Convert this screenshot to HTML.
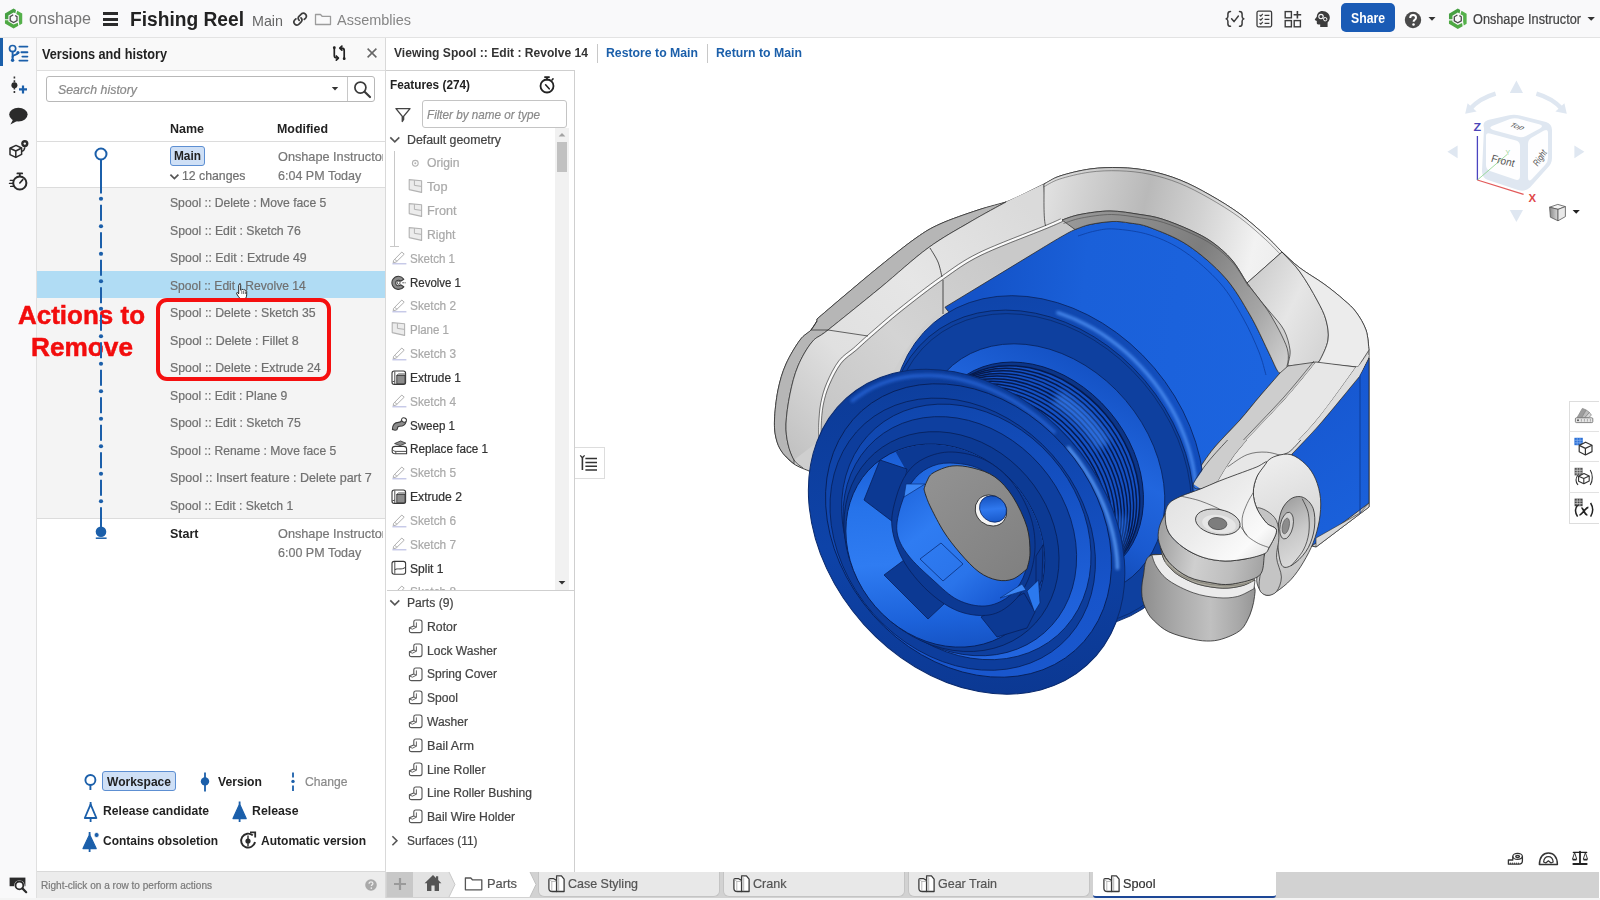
<!DOCTYPE html>
<html><head><meta charset="utf-8"><title>Fishing Reel</title>
<style>
html,body{margin:0;padding:0;}
body{width:1600px;height:900px;overflow:hidden;background:#fff;position:relative;font-family:"Liberation Sans",sans-serif;}
#r{position:absolute;left:0;top:0;width:1600px;height:900px;overflow:hidden;}
#r div,#r svg,#r span.t{position:absolute;box-sizing:border-box;}
#r span.t{white-space:nowrap;transform-origin:0 50%;display:block;}
</style></head><body><div id="r">
<svg style="left:740px;top:140px;" width="660" height="580" viewBox="740 140 660 580"><defs><linearGradient id="gTop" gradientUnits="userSpaceOnUse" x1="1040" y1="200" x2="1290" y2="260"><stop offset="0" stop-color="#e2e2e2"/><stop offset="0.18" stop-color="#cfcfcf"/><stop offset="0.4" stop-color="#b9b9b9"/><stop offset="0.62" stop-color="#d2d2d2"/><stop offset="0.85" stop-color="#f2f2f2"/><stop offset="1" stop-color="#ececec"/></linearGradient><linearGradient id="gLeft" gradientUnits="userSpaceOnUse" x1="790" y1="450" x2="1040" y2="220"><stop offset="0" stop-color="#c2c2c2"/><stop offset="0.12" stop-color="#cecece"/><stop offset="0.3" stop-color="#e0e0e0"/><stop offset="0.6" stop-color="#e6e6e6"/><stop offset="1" stop-color="#dadada"/></linearGradient><linearGradient id="gRight" gradientUnits="userSpaceOnUse" x1="1250" y1="290" x2="1330" y2="330"><stop offset="0" stop-color="#cfcfcf"/><stop offset="0.5" stop-color="#e6e6e6"/><stop offset="1" stop-color="#d6d6d6"/></linearGradient><linearGradient id="gInner" gradientUnits="userSpaceOnUse" x1="820" y1="440" x2="1000" y2="260"><stop offset="0" stop-color="#c4c4c4"/><stop offset="0.5" stop-color="#d4d4d4"/><stop offset="1" stop-color="#c9c9c9"/></linearGradient><linearGradient id="bSide" gradientUnits="userSpaceOnUse" x1="1290" y1="380" x2="1369" y2="500"><stop offset="0" stop-color="#1656cf"/><stop offset="1" stop-color="#1a60da"/></linearGradient><linearGradient id="bCyl" gradientUnits="userSpaceOnUse" x1="980" y1="300" x2="1270" y2="330"><stop offset="0" stop-color="#1453c8"/><stop offset="0.35" stop-color="#1a60d9"/><stop offset="1" stop-color="#1c64df"/></linearGradient><linearGradient id="gRing" gradientUnits="userSpaceOnUse" x1="1060" y1="220" x2="1290" y2="360"><stop offset="0" stop-color="#9a9a9a"/><stop offset="0.5" stop-color="#7d7d7d"/><stop offset="0.8" stop-color="#a5a5a5"/><stop offset="1" stop-color="#d0d0d0"/></linearGradient><filter id="blur2" x="-20%" y="-20%" width="140%" height="140%"><feGaussianBlur stdDeviation="1.6"/></filter><filter id="blur4" x="-20%" y="-20%" width="140%" height="140%"><feGaussianBlur stdDeviation="3.5"/></filter><linearGradient id="bRear" gradientUnits="userSpaceOnUse" x1="930" y1="330" x2="1200" y2="480"><stop offset="0" stop-color="#0f45ab"/><stop offset="0.45" stop-color="#1350c2"/><stop offset="0.8" stop-color="#1049b6"/><stop offset="1" stop-color="#0d3f9f"/></linearGradient><linearGradient id="bStep" gradientUnits="userSpaceOnUse" x1="1040" y1="340" x2="1150" y2="610"><stop offset="0" stop-color="#1350c2"/><stop offset="0.3" stop-color="#2166de"/><stop offset="0.5" stop-color="#1a5ad0"/><stop offset="0.7" stop-color="#1046ad"/><stop offset="1" stop-color="#0d3c98"/></linearGradient><linearGradient id="bFrontRim" gradientUnits="userSpaceOnUse" x1="820" y1="420" x2="1120" y2="640"><stop offset="0" stop-color="#0c3a95"/><stop offset="0.5" stop-color="#0e43a8"/><stop offset="1" stop-color="#0b3790"/></linearGradient><linearGradient id="bFace" gradientUnits="userSpaceOnUse" x1="830" y1="450" x2="1110" y2="620"><stop offset="0" stop-color="#0d3e9c"/><stop offset="0.4" stop-color="#1149b4"/><stop offset="0.75" stop-color="#1754ca"/><stop offset="1" stop-color="#1a58ce"/></linearGradient><linearGradient id="bFaceB" gradientUnits="userSpaceOnUse" x1="830" y1="450" x2="1110" y2="620"><stop offset="0" stop-color="#0f44a8"/><stop offset="0.4" stop-color="#1450c2"/><stop offset="0.75" stop-color="#1f61da"/><stop offset="1" stop-color="#2468e2"/></linearGradient><linearGradient id="bFunnel" gradientUnits="userSpaceOnUse" x1="850" y1="480" x2="1040" y2="620"><stop offset="0" stop-color="#1656cf"/><stop offset="0.3" stop-color="#2673ea"/><stop offset="0.55" stop-color="#2f7cf2"/><stop offset="0.8" stop-color="#1c62da"/><stop offset="1" stop-color="#124bb8"/></linearGradient><linearGradient id="bBore" gradientUnits="userSpaceOnUse" x1="895" y1="480" x2="1000" y2="610"><stop offset="0" stop-color="#1c62da"/><stop offset="0.35" stop-color="#2f7cf2"/><stop offset="0.7" stop-color="#2a74ea"/><stop offset="1" stop-color="#1656cf"/></linearGradient><linearGradient id="gDisc" gradientUnits="userSpaceOnUse" x1="930" y1="470" x2="1030" y2="580"><stop offset="0" stop-color="#929292"/><stop offset="1" stop-color="#7f7f7f"/></linearGradient><linearGradient id="bHole" gradientUnits="userSpaceOnUse" x1="980" y1="498" x2="1004" y2="522"><stop offset="0" stop-color="#0f48b2"/><stop offset="0.5" stop-color="#2f78ee"/><stop offset="1" stop-color="#1250c0"/></linearGradient><linearGradient id="gRoll" gradientUnits="userSpaceOnUse" x1="1142" y1="600" x2="1256" y2="600"><stop offset="0" stop-color="#8e8e8e"/><stop offset="0.3" stop-color="#a9a9a9"/><stop offset="0.6" stop-color="#c0c0c0"/><stop offset="0.85" stop-color="#a8a8a8"/><stop offset="1" stop-color="#959595"/></linearGradient><linearGradient id="gEye" gradientUnits="userSpaceOnUse" x1="1270" y1="460" x2="1325" y2="590"><stop offset="0" stop-color="#ededed"/><stop offset="0.5" stop-color="#d9d9d9"/><stop offset="1" stop-color="#b9b9b9"/></linearGradient><linearGradient id="gEyeIn" gradientUnits="userSpaceOnUse" x1="1280" y1="500" x2="1320" y2="560"><stop offset="0" stop-color="#9c9c9c"/><stop offset="0.5" stop-color="#c9c9c9"/><stop offset="1" stop-color="#e2e2e2"/></linearGradient><linearGradient id="gHeadS" gradientUnits="userSpaceOnUse" x1="1160" y1="540" x2="1268" y2="560"><stop offset="0" stop-color="#a2a2a2"/><stop offset="0.35" stop-color="#cfcfcf"/><stop offset="0.7" stop-color="#bdbdbd"/><stop offset="1" stop-color="#a0a0a0"/></linearGradient><linearGradient id="gHeadT" gradientUnits="userSpaceOnUse" x1="1170" y1="470" x2="1260" y2="560"><stop offset="0" stop-color="#dedede"/><stop offset="0.5" stop-color="#ececec"/><stop offset="0.85" stop-color="#fafafa"/><stop offset="1" stop-color="#e6e6e6"/></linearGradient></defs><path d="M809.0,471.0 C806.5,469.8 798.5,467.2 794.0,464.0 C789.5,460.8 785.0,456.3 782.0,452.0 C779.0,447.7 777.2,443.3 776.0,438.0 C774.8,432.7 774.2,428.0 774.5,420.0 C774.8,412.0 776.1,399.3 778.0,390.0 C779.9,380.7 782.3,372.3 786.0,364.0 C789.7,355.7 795.8,345.7 800.0,340.0 C804.2,334.3 808.2,333.2 811.0,330.0 C813.8,326.8 816.0,322.5 817.0,321.0 L817.0,319.0 C821.5,315.2 833.5,304.8 844.0,296.0 C854.5,287.2 868.0,275.7 880.0,266.0 C892.0,256.3 906.0,245.0 916.0,238.0 C926.0,231.0 929.7,228.7 940.0,224.0 C950.3,219.3 967.0,213.7 978.0,210.0 C989.0,206.3 995.0,206.3 1006.0,202.0 C1017.0,197.7 1035.0,188.3 1044.0,184.0 C1053.0,179.7 1052.3,178.5 1060.0,176.0 C1067.7,173.5 1080.0,170.4 1090.0,169.0 C1100.0,167.6 1110.0,167.3 1120.0,167.6 C1130.0,167.9 1140.0,168.9 1150.0,171.0 C1160.0,173.1 1170.0,176.0 1180.0,180.0 C1190.0,184.0 1200.0,189.3 1210.0,195.0 C1220.0,200.7 1230.7,207.2 1240.0,214.0 C1249.3,220.8 1259.0,229.7 1266.0,236.0 C1273.0,242.3 1276.3,246.7 1282.0,252.0 C1287.7,257.3 1293.0,262.7 1300.0,268.0 C1307.0,273.3 1316.7,278.7 1324.0,284.0 C1331.3,289.3 1338.7,295.3 1344.0,300.0 C1349.3,304.7 1352.3,307.0 1356.0,312.0 C1359.7,317.0 1363.8,323.7 1366.0,330.0 C1368.2,336.3 1368.5,346.7 1369.0,350.0 L1369.0,350.0 L1369.0,507.0 L1369.0,507.0 L1316.0,547.0 L1316.0,547.0 L1200.0,520.0 L1200.0,520.0 L1000.0,500.0 L1000.0,500.0 L809.0,471.0Z" fill="#cfcfcf" stroke="#2a2a2a" stroke-width="0.9" /><path d="M794.0,464.0 C792.0,462.0 785.0,456.3 782.0,452.0 C779.0,447.7 777.2,443.3 776.0,438.0 C774.8,432.7 774.2,428.0 774.5,420.0 C774.8,412.0 776.1,399.3 778.0,390.0 C779.9,380.7 782.3,372.3 786.0,364.0 C789.7,355.7 795.8,345.7 800.0,340.0 C804.2,334.3 808.2,333.2 811.0,330.0 C813.8,326.8 816.0,322.5 817.0,321.0 L817.0,319.0 C821.5,315.2 833.5,304.8 844.0,296.0 C854.5,287.2 868.0,275.7 880.0,266.0 C892.0,256.3 906.0,245.0 916.0,238.0 C926.0,231.0 929.7,228.7 940.0,224.0 C950.3,219.3 967.0,213.7 978.0,210.0 C989.0,206.3 1001.3,203.3 1006.0,202.0 L1006.0,202.0 C1000.0,205.3 983.0,214.3 970.0,222.0 C957.0,229.7 943.0,237.0 928.0,248.0 C913.0,259.0 896.7,274.3 880.0,288.0 C863.3,301.7 839.3,321.0 828.0,330.0 C816.7,339.0 817.0,336.0 812.0,342.0 C807.0,348.0 801.7,357.3 798.0,366.0 C794.3,374.7 792.0,384.3 790.0,394.0 C788.0,403.7 786.3,415.7 786.0,424.0 C785.7,432.3 786.7,438.0 788.0,444.0 C789.3,450.0 793.0,457.3 794.0,460.0Z" fill="#b6b6b6" stroke="#2a2a2a" stroke-width="0.7" /><path d="M794.0,460.0 C793.0,457.3 789.3,450.0 788.0,444.0 C786.7,438.0 785.7,432.3 786.0,424.0 C786.3,415.7 788.0,403.7 790.0,394.0 C792.0,384.3 794.3,374.7 798.0,366.0 C801.7,357.3 807.0,348.0 812.0,342.0 C817.0,336.0 816.7,339.0 828.0,330.0 C839.3,321.0 863.3,301.7 880.0,288.0 C896.7,274.3 913.0,259.0 928.0,248.0 C943.0,237.0 957.0,229.7 970.0,222.0 C983.0,214.3 1000.0,205.3 1006.0,202.0 L1006.0,202.0 L1044.0,184.0 L1044.0,184.0 L1046.0,227.0 L1046.0,227.0 C1035.0,231.5 997.3,245.5 980.0,254.0 C962.7,262.5 955.3,268.7 942.0,278.0 C928.7,287.3 912.0,300.4 900.0,310.0 C888.0,319.6 877.5,329.0 870.0,335.5 C862.5,342.0 860.0,344.6 855.0,349.0 C850.0,353.4 844.5,356.2 840.0,362.0 C835.5,367.8 831.0,377.0 828.0,384.0 C825.0,391.0 823.3,397.3 822.0,404.0 C820.7,410.7 820.3,418.0 820.0,424.0 C819.7,430.0 820.0,437.3 820.0,440.0Z" fill="url(#gLeft)" stroke="none" stroke-width="1" /><path d="M803.0,468.0 C801.5,466.7 796.5,464.0 794.0,460.0 C791.5,456.0 789.3,450.0 788.0,444.0 C786.7,438.0 785.7,432.3 786.0,424.0 C786.3,415.7 788.0,403.7 790.0,394.0 C792.0,384.3 794.3,374.7 798.0,366.0 C801.7,357.3 807.0,348.0 812.0,342.0 C817.0,336.0 816.7,339.0 828.0,330.0 C839.3,321.0 863.3,301.7 880.0,288.0 C896.7,274.3 913.0,259.0 928.0,248.0 C943.0,237.0 957.0,229.7 970.0,222.0 C983.0,214.3 1000.0,205.3 1006.0,202.0" fill="none" stroke="#2a2a2a" stroke-width="0.7" /><path d="M1044,184 L1046,227" fill="none" stroke="#2a2a2a" stroke-width="0.7" /><path d="M1044.0,184.0 C1046.7,182.7 1052.3,178.5 1060.0,176.0 C1067.7,173.5 1080.0,170.4 1090.0,169.0 C1100.0,167.6 1110.0,167.3 1120.0,167.6 C1130.0,167.9 1140.0,168.9 1150.0,171.0 C1160.0,173.1 1170.0,176.0 1180.0,180.0 C1190.0,184.0 1200.0,189.3 1210.0,195.0 C1220.0,200.7 1230.7,207.2 1240.0,214.0 C1249.3,220.8 1259.0,229.7 1266.0,236.0 C1273.0,242.3 1279.3,249.3 1282.0,252.0 L1282.0,252.0 L1247.0,283.0 L1247.0,283.0 C1244.5,279.2 1237.8,266.8 1232.0,260.0 C1226.2,253.2 1219.0,247.0 1212.0,242.0 C1205.0,237.0 1198.3,233.8 1190.0,230.0 C1181.7,226.2 1170.3,221.6 1162.0,219.0 C1153.7,216.4 1148.7,215.8 1140.0,214.5 C1131.3,213.2 1120.0,211.0 1110.0,211.0 C1100.0,211.0 1088.0,213.0 1080.0,214.5 C1072.0,216.0 1065.0,219.1 1062.0,220.0 L1062.0,220.0 C1059.3,221.2 1049.0,233.0 1046.0,227.0 C1043.0,221.0 1044.3,191.2 1044.0,184.0Z" fill="url(#gTop)" stroke="#2a2a2a" stroke-width="0.7" /><path d="M1043.2,187.2 C1045.9,185.9 1051.5,181.7 1059.2,179.2 C1066.9,176.7 1079.2,173.6 1089.2,172.2 C1099.2,170.8 1109.2,170.5 1119.2,170.8 C1129.2,171.1 1139.2,172.1 1149.2,174.2 C1159.2,176.3 1169.2,179.2 1179.2,183.2 C1189.2,187.2 1199.2,192.5 1209.2,198.2 C1219.2,203.9 1229.9,210.4 1239.2,217.2 C1248.5,224.0 1258.2,232.9 1265.2,239.2 C1272.2,245.5 1278.5,252.5 1281.2,255.2" fill="none" stroke="#555" stroke-width="0.6" /><path d="M1247.0,283.0 L1282.0,252.0 L1282.0,252.0 C1285.0,255.3 1294.2,264.0 1300.0,272.0 C1305.8,280.0 1312.7,292.0 1317.0,300.0 C1321.3,308.0 1324.2,313.3 1326.0,320.0 C1327.8,326.7 1329.0,333.3 1328.0,340.0 C1327.0,346.7 1322.0,356.2 1320.0,360.0 C1318.0,363.8 1316.7,362.5 1316.0,363.0 L1316.0,363.0 L1288.0,366.0 L1288.0,364.0 C1288.3,361.7 1290.7,355.7 1290.0,350.0 C1289.3,344.3 1287.3,336.3 1284.0,330.0 C1280.7,323.7 1274.0,317.0 1270.0,312.0 C1266.0,307.0 1263.8,304.8 1260.0,300.0 C1256.2,295.2 1249.2,285.8 1247.0,283.0Z" fill="url(#gRight)" stroke="#2a2a2a" stroke-width="0.7" /><path d="M1282.0,252.0 C1285.0,254.7 1293.0,262.7 1300.0,268.0 C1307.0,273.3 1316.7,278.7 1324.0,284.0 C1331.3,289.3 1338.7,295.3 1344.0,300.0 C1349.3,304.7 1352.3,307.0 1356.0,312.0 C1359.7,317.0 1363.8,323.7 1366.0,330.0 C1368.2,336.3 1368.5,346.7 1369.0,350.0 L1369.0,350.0 L1358.0,367.0 L1358.0,367.0 L1316.0,363.0 L1316.0,363.0 C1316.7,362.5 1318.0,363.8 1320.0,360.0 C1322.0,356.2 1327.0,346.7 1328.0,340.0 C1329.0,333.3 1327.8,326.7 1326.0,320.0 C1324.2,313.3 1321.3,308.0 1317.0,300.0 C1312.7,292.0 1305.8,280.0 1300.0,272.0 C1294.2,264.0 1285.0,255.3 1282.0,252.0Z" fill="#ececec" stroke="#2a2a2a" stroke-width="0.7" /><path d="M820.0,440.0 C820.0,437.3 819.7,430.0 820.0,424.0 C820.3,418.0 820.7,410.7 822.0,404.0 C823.3,397.3 825.0,391.0 828.0,384.0 C831.0,377.0 835.5,367.8 840.0,362.0 C844.5,356.2 850.0,353.4 855.0,349.0 C860.0,344.6 862.5,342.0 870.0,335.5 C877.5,329.0 888.0,319.6 900.0,310.0 C912.0,300.4 928.7,287.3 942.0,278.0 C955.3,268.7 962.7,262.5 980.0,254.0 C997.3,245.5 1032.3,232.7 1046.0,227.0 C1059.7,221.3 1059.3,221.2 1062.0,220.0 L1062.0,220.0 L1075.0,229.5 L1075.0,229.5 C1069.2,232.8 1061.7,236.6 1040.0,249.5 C1018.3,262.4 968.3,288.6 945.0,307.0 C921.7,325.4 914.2,337.8 900.0,360.0 C885.8,382.2 873.3,426.7 860.0,440.0 C846.7,453.3 826.7,440.0 820.0,440.0Z" fill="url(#gInner)" stroke="none" stroke-width="1" /><path d="M820.0,440.0 C820.0,437.3 819.7,430.0 820.0,424.0 C820.3,418.0 820.7,410.7 822.0,404.0 C823.3,397.3 825.0,391.0 828.0,384.0 C831.0,377.0 835.5,367.8 840.0,362.0 C844.5,356.2 850.0,353.4 855.0,349.0 C860.0,344.6 862.5,342.0 870.0,335.5 C877.5,329.0 888.0,319.6 900.0,310.0 C912.0,300.4 928.7,287.3 942.0,278.0 C955.3,268.7 962.7,262.5 980.0,254.0 C997.3,245.5 1032.3,232.7 1046.0,227.0 C1059.7,221.3 1059.3,221.2 1062.0,220.0" fill="none" stroke="#fafafa" stroke-width="2.2" /><path d="M821.2,441.2 C821.2,438.5 820.9,431.2 821.2,425.2 C821.5,419.2 821.9,411.9 823.2,405.2 C824.5,398.5 826.2,392.2 829.2,385.2 C832.2,378.2 836.7,369.0 841.2,363.2 C845.7,357.4 851.2,354.6 856.2,350.2 C861.2,345.8 863.7,343.2 871.2,336.7 C878.7,330.2 889.2,320.8 901.2,311.2 C913.2,301.6 929.9,288.5 943.2,279.2 C956.5,269.9 963.9,263.7 981.2,255.2 C998.5,246.7 1033.5,233.9 1047.2,228.2 C1060.9,222.5 1060.5,222.4 1063.2,221.2" fill="none" stroke="#2a2a2a" stroke-width="0.6" /><path d="M818.8,438.8 C818.8,436.1 818.5,428.8 818.8,422.8 C819.1,416.8 819.5,409.5 820.8,402.8 C822.1,396.1 823.8,389.8 826.8,382.8 C829.8,375.8 834.3,366.6 838.8,360.8 C843.3,355.0 848.8,352.2 853.8,347.8 C858.8,343.4 861.3,340.8 868.8,334.3 C876.3,327.8 886.8,318.4 898.8,308.8 C910.8,299.2 927.5,286.1 940.8,276.8 C954.1,267.5 961.5,261.3 978.8,252.8 C996.1,244.3 1031.1,231.5 1044.8,225.8 C1058.5,220.1 1058.1,220.0 1060.8,218.8" fill="none" stroke="#2a2a2a" stroke-width="0.6" /><path d="M930.0,248.0 C931.3,250.3 936.0,257.2 938.0,262.0 C940.0,266.8 941.3,274.5 942.0,277.0" fill="none" stroke="#2a2a2a" stroke-width="0.8" /><path d="M943,280 L943,314" fill="none" stroke="#2a2a2a" stroke-width="0.8" /><path d="M828,330 L868,336" fill="none" stroke="#2a2a2a" stroke-width="0.7" /><path d="M817,321 L811,330 L828,330" fill="none" stroke="#2a2a2a" stroke-width="0.7" /><path d="M1369.0,358.0 L1369.0,503.0 L1316.0,543.0 L1292.0,560.0 L1292.0,454.0 L1320.0,424.0 L1359.0,377.0Z" fill="url(#bSide)" stroke="#2a2a2a" stroke-width="0.8" /><path d="M1369.0,503.0 L1369.0,507.0 L1316.0,547.0 L1316.0,538.0 L1360.0,513.0Z" fill="#d9d9d9" stroke="#2a2a2a" stroke-width="0.6" /><path d="M1360,372 L1360,513" fill="none" stroke="#0c3c98" stroke-width="1" /><path d="M945.0,307.2 L1040.0,249.5 L1040.0,249.5 C1043.3,247.5 1054.2,240.8 1060.0,237.5 C1065.8,234.2 1070.0,231.7 1075.0,229.5 C1080.0,227.3 1083.8,225.8 1090.0,224.5 C1096.2,223.2 1105.3,221.8 1112.0,221.5 C1118.7,221.2 1123.7,222.0 1130.0,223.0 C1136.3,224.0 1140.4,223.8 1150.0,227.5 C1159.6,231.2 1175.0,236.7 1187.5,245.0 C1200.0,253.3 1214.6,265.8 1225.0,277.5 C1235.4,289.2 1242.9,302.9 1250.0,315.0 C1257.1,327.1 1263.0,340.8 1267.5,350.0 C1272.0,359.2 1275.4,366.7 1277.0,370.0 L1277.0,370.0 C1277.5,370.5 1282.8,368.7 1280.0,373.0 C1277.2,377.3 1266.7,388.2 1260.0,396.0 C1253.3,403.8 1247.7,411.3 1240.0,420.0 C1232.3,428.7 1221.5,438.8 1214.0,448.0 C1206.5,457.2 1198.2,470.5 1195.0,475.0 L1195.0,475.0 C1179.2,482.5 1132.5,532.5 1100.0,520.0 C1067.5,507.5 1022.5,430.8 1000.0,400.0 C977.5,369.2 974.2,350.5 965.0,335.0 C955.8,319.5 948.3,311.8 945.0,307.2Z" fill="url(#bCyl)" stroke="#2a2a2a" stroke-width="0.8" /><path d="M1078.0,236.0 C1080.8,235.2 1088.8,232.2 1095.0,231.0 C1101.2,229.8 1105.8,228.3 1115.0,229.0 C1124.2,229.7 1138.3,231.2 1150.0,235.0 C1161.7,238.8 1173.3,244.0 1185.0,252.0 C1196.7,260.0 1210.3,272.0 1220.0,283.0 C1229.7,294.0 1236.5,306.5 1243.0,318.0 C1249.5,329.5 1255.2,342.5 1259.0,352.0 C1262.8,361.5 1264.8,371.2 1266.0,375.0" fill="none" stroke="#0e42a6" stroke-width="0.9" /><path d="M1062.0,220.0 C1065.0,219.1 1072.0,216.0 1080.0,214.5 C1088.0,213.0 1100.0,211.0 1110.0,211.0 C1120.0,211.0 1131.3,213.2 1140.0,214.5 C1148.7,215.8 1153.7,216.4 1162.0,219.0 C1170.3,221.6 1181.7,226.2 1190.0,230.0 C1198.3,233.8 1205.0,237.0 1212.0,242.0 C1219.0,247.0 1226.2,253.2 1232.0,260.0 C1237.8,266.8 1242.3,276.3 1247.0,283.0 C1251.7,289.7 1256.2,294.8 1260.0,300.0 C1263.8,305.2 1266.3,308.0 1270.0,314.0 C1273.7,320.0 1279.0,329.7 1282.0,336.0 C1285.0,342.3 1287.2,347.0 1288.0,352.0 C1288.8,357.0 1288.3,362.3 1287.0,366.0 C1285.7,369.7 1281.2,372.7 1280.0,374.0 L1280.0,373.0 C1279.5,372.5 1279.1,373.8 1277.0,370.0 C1274.9,366.2 1272.0,359.2 1267.5,350.0 C1263.0,340.8 1257.1,327.1 1250.0,315.0 C1242.9,302.9 1235.4,289.2 1225.0,277.5 C1214.6,265.8 1200.0,253.3 1187.5,245.0 C1175.0,236.7 1159.6,231.2 1150.0,227.5 C1140.4,223.8 1136.3,224.0 1130.0,223.0 C1123.7,222.0 1118.7,221.2 1112.0,221.5 C1105.3,221.8 1096.2,223.2 1090.0,224.5 C1083.8,225.8 1077.5,228.7 1075.0,229.5Z" fill="url(#gRing)" stroke="#2a2a2a" stroke-width="0.7" /><path d="M1063.5,223.5 C1066.5,222.6 1073.5,219.5 1081.5,218.0 C1089.5,216.5 1101.5,214.5 1111.5,214.5 C1121.5,214.5 1132.8,216.7 1141.5,218.0 C1150.2,219.3 1155.2,219.9 1163.5,222.5 C1171.8,225.1 1183.2,229.7 1191.5,233.5 C1199.8,237.3 1206.5,240.5 1213.5,245.5 C1220.5,250.5 1227.7,256.7 1233.5,263.5 C1239.3,270.3 1246.0,282.7 1248.5,286.5" fill="none" stroke="#555" stroke-width="0.7" /><path d="M1280.0,373.0 C1276.7,376.8 1266.7,388.2 1260.0,396.0 C1253.3,403.8 1247.7,411.3 1240.0,420.0 C1232.3,428.7 1221.2,439.3 1214.0,448.0 C1206.8,456.7 1199.8,468.0 1197.0,472.0 L1197.0,472.0 L1222.0,470.0 L1222.0,470.0 C1225.0,466.2 1229.3,459.0 1240.0,447.0 C1250.7,435.0 1273.3,412.2 1286.0,398.0 C1298.7,383.8 1311.0,368.0 1316.0,362.0 L1316.0,362.0 C1311.3,362.7 1294.0,364.2 1288.0,366.0 C1282.0,367.8 1281.3,371.8 1280.0,373.0Z" fill="#cdcdcd" stroke="none" stroke-width="1" /><path d="M1280.0,373.0 C1276.7,376.8 1266.7,388.2 1260.0,396.0 C1253.3,403.8 1247.7,411.3 1240.0,420.0 C1232.3,428.7 1221.2,439.3 1214.0,448.0 C1206.8,456.7 1199.8,468.0 1197.0,472.0" fill="none" stroke="#2a2a2a" stroke-width="0.7" /><path d="M1316.0,362.0 C1311.0,368.0 1298.7,383.8 1286.0,398.0 C1273.3,412.2 1250.7,435.0 1240.0,447.0 C1229.3,459.0 1225.0,466.2 1222.0,470.0" fill="none" stroke="#2a2a2a" stroke-width="0.7" /><path d="M1316,362 L1288,366 L1280,373" fill="none" stroke="#2a2a2a" stroke-width="0.7" /><path d="M1316.0,362.0 C1311.0,368.0 1298.7,383.8 1286.0,398.0 C1273.3,412.2 1250.7,435.0 1240.0,447.0 C1229.3,459.0 1225.0,466.2 1222.0,470.0 L1222.0,470.0 L1268.0,470.0 L1268.0,470.0 C1271.7,466.5 1281.3,458.0 1290.0,449.0 C1298.7,440.0 1309.0,429.7 1320.0,416.0 C1331.0,402.3 1350.0,375.2 1356.0,367.0 L1356.0,367.0 L1316.0,362.0Z" fill="#e7e7e7" stroke="none" stroke-width="1" /><path d="M1356.0,367.0 C1350.0,375.2 1331.0,402.3 1320.0,416.0 C1309.0,429.7 1298.7,440.0 1290.0,449.0 C1281.3,458.0 1271.7,466.5 1268.0,470.0" fill="none" stroke="#2a2a2a" stroke-width="0.7" /><path d="M1356,367 L1316,362" fill="none" stroke="#2a2a2a" stroke-width="0.7" /><path d="M1356.0,367.0 C1350.0,375.2 1331.0,402.3 1320.0,416.0 C1309.0,429.7 1298.7,440.0 1290.0,449.0 C1281.3,458.0 1271.7,466.5 1268.0,470.0 L1268.0,470.0 L1275.0,472.0 L1275.0,472.0 C1277.8,469.0 1284.5,462.0 1292.0,454.0 C1299.5,446.0 1308.8,436.8 1320.0,424.0 C1331.2,411.2 1352.5,384.8 1359.0,377.0 L1359.0,377.0 C1360.7,373.3 1369.2,356.7 1369.0,355.0 C1368.8,353.3 1359.8,365.0 1358.0,367.0Z" fill="#dedede" stroke="none" stroke-width="1" /><path d="M1359.0,377.0 C1352.5,384.8 1331.2,411.2 1320.0,424.0 C1308.8,436.8 1299.5,446.0 1292.0,454.0 C1284.5,462.0 1277.8,469.0 1275.0,472.0" fill="none" stroke="#2a2a2a" stroke-width="0.6" /><path d="M1314.0,361.0 C1309.0,367.0 1296.7,382.8 1284.0,397.0 C1271.3,411.2 1248.7,434.0 1238.0,446.0 C1227.3,458.0 1223.0,465.2 1220.0,469.0" fill="none" stroke="#2a2a2a" stroke-width="0.6" /><ellipse cx="1048.0" cy="458.0" rx="177.0" ry="139.3" transform="rotate(49.7 1048.0 458.0)" fill="url(#bRear)" stroke="#0a2a6e" stroke-width="0.9" /><path d="M1057.8,312.7 C1060.8,313.8 1069.9,317.0 1075.8,319.7 C1081.7,322.3 1087.6,325.4 1093.3,328.7 C1099.0,332.0 1104.7,335.7 1110.1,339.6 C1115.6,343.6 1120.9,347.8 1126.0,352.3 C1131.1,356.8 1136.0,361.6 1140.7,366.6 C1145.4,371.6 1149.9,376.9 1154.1,382.3 C1158.2,387.7 1162.2,393.3 1165.8,399.1 C1169.5,404.8 1172.8,410.7 1175.9,416.8 C1178.9,422.8 1181.6,428.9 1184.0,435.1 C1186.4,441.3 1188.5,447.6 1190.2,453.9 C1191.9,460.1 1193.2,466.4 1194.2,472.7 C1195.2,479.0 1195.9,485.2 1196.2,491.4 C1196.4,497.6 1196.4,503.7 1195.9,509.7 C1195.5,515.7 1194.7,521.6 1193.5,527.3 C1192.3,533.0 1190.8,538.6 1188.9,543.9 C1187.1,549.3 1183.4,556.8 1182.3,559.4" fill="none" stroke="#4f92f6" stroke-width="3.2" stroke-linecap="round" opacity="0.9" filter="url(#blur2)"/><ellipse cx="1041.0" cy="469.0" rx="173.3" ry="136.4" transform="rotate(49.7 1041.0 469.0)" fill="#0e409f" stroke="#08245f" stroke-width="0.8" /><ellipse cx="1041.5" cy="469.5" rx="170.0" ry="133.8" transform="rotate(49.7 1041.5 469.5)" fill="#0e409f" stroke="#08245f" stroke-width="0.6" /><ellipse cx="1042.4" cy="471.0" rx="138.7" ry="109.2" transform="rotate(49.7 1042.4 471.0)" fill="url(#bStep)" stroke="#08245f" stroke-width="0.8" /><ellipse cx="1036.7" cy="473.0" rx="121.0" ry="95.2" transform="rotate(49.7 1036.7 473.0)" fill="#0b3589" stroke="#061c50" stroke-width="0.9" /><ellipse cx="1033.8" cy="475.7" rx="120.0" ry="94.4" transform="rotate(49.7 1033.8 475.7)" fill="#1450c2" stroke="#061a4c" stroke-width="1.5" /><ellipse cx="1030.7" cy="478.3" rx="120.0" ry="94.4" transform="rotate(49.7 1030.7 478.3)" fill="#1450c2" stroke="#061a4c" stroke-width="1.5" /><ellipse cx="1027.7" cy="480.9" rx="120.0" ry="94.4" transform="rotate(49.7 1027.7 480.9)" fill="#1450c2" stroke="#061a4c" stroke-width="1.5" /><ellipse cx="1024.6" cy="483.5" rx="120.0" ry="94.4" transform="rotate(49.7 1024.6 483.5)" fill="#1450c2" stroke="#061a4c" stroke-width="1.5" /><ellipse cx="1021.6" cy="486.1" rx="120.0" ry="94.4" transform="rotate(49.7 1021.6 486.1)" fill="#1450c2" stroke="#061a4c" stroke-width="1.5" /><ellipse cx="1018.5" cy="488.7" rx="120.0" ry="94.4" transform="rotate(49.7 1018.5 488.7)" fill="#1450c2" stroke="#061a4c" stroke-width="1.5" /><ellipse cx="1015.5" cy="491.2" rx="120.0" ry="94.4" transform="rotate(49.7 1015.5 491.2)" fill="#1450c2" stroke="#061a4c" stroke-width="1.5" /><ellipse cx="1012.5" cy="493.8" rx="120.0" ry="94.4" transform="rotate(49.7 1012.5 493.8)" fill="#1450c2" stroke="#061a4c" stroke-width="1.5" /><ellipse cx="1009.4" cy="496.4" rx="120.0" ry="94.4" transform="rotate(49.7 1009.4 496.4)" fill="#1450c2" stroke="#061a4c" stroke-width="1.5" /><ellipse cx="1006.4" cy="499.0" rx="120.0" ry="94.4" transform="rotate(49.7 1006.4 499.0)" fill="#1450c2" stroke="#061a4c" stroke-width="1.5" /><ellipse cx="1003.3" cy="501.6" rx="120.0" ry="94.4" transform="rotate(49.7 1003.3 501.6)" fill="#1450c2" stroke="#061a4c" stroke-width="1.5" /><ellipse cx="1000.3" cy="504.2" rx="120.0" ry="94.4" transform="rotate(49.7 1000.3 504.2)" fill="#1450c2" stroke="#061a4c" stroke-width="1.5" /><ellipse cx="997.2" cy="506.8" rx="120.0" ry="94.4" transform="rotate(49.7 997.2 506.8)" fill="#1450c2" stroke="#061a4c" stroke-width="1.5" /><ellipse cx="994.2" cy="509.4" rx="120.0" ry="94.4" transform="rotate(49.7 994.2 509.4)" fill="#1450c2" stroke="#061a4c" stroke-width="1.5" /><ellipse cx="991.1" cy="511.9" rx="120.0" ry="94.4" transform="rotate(49.7 991.1 511.9)" fill="#1450c2" stroke="#061a4c" stroke-width="1.5" /><ellipse cx="988.1" cy="514.5" rx="120.0" ry="94.4" transform="rotate(49.7 988.1 514.5)" fill="#1450c2" stroke="#061a4c" stroke-width="1.5" /><ellipse cx="985.0" cy="517.1" rx="120.0" ry="94.4" transform="rotate(49.7 985.0 517.1)" fill="#1450c2" stroke="#061a4c" stroke-width="1.5" /><path d="M1056.3,397.0 C1057.2,397.6 1060.1,399.4 1062.0,400.7 C1063.8,402.0 1065.7,403.3 1067.5,404.7 C1069.3,406.1 1071.1,407.6 1072.8,409.1 C1074.6,410.6 1076.3,412.1 1078.0,413.7 C1079.6,415.2 1081.3,416.8 1082.9,418.5 C1084.5,420.2 1086.1,421.9 1087.6,423.6 C1089.2,425.3 1090.7,427.1 1092.1,428.9 C1093.6,430.7 1095.0,432.5 1096.3,434.4 C1097.7,436.3 1099.0,438.1 1100.3,440.1 C1101.6,442.0 1103.4,444.9 1104.0,445.9" fill="none" stroke="#3a80ee" stroke-width="16" opacity="0.6" filter="url(#blur4)"/><path d="M1122.7,515.7 C1122.6,516.7 1122.4,519.9 1122.1,521.9 C1121.9,524.0 1121.6,526.0 1121.3,528.0 C1120.9,530.0 1120.5,532.0 1120.0,533.9 C1119.5,535.9 1119.0,537.8 1118.3,539.7 C1117.7,541.6 1117.1,543.4 1116.3,545.3 C1115.6,547.1 1114.8,548.9 1114.0,550.6 C1113.1,552.3 1112.2,554.0 1111.2,555.7 C1110.3,557.3 1109.2,558.9 1108.2,560.5 C1107.1,562.1 1105.9,563.6 1104.8,565.1 C1103.6,566.5 1101.7,568.6 1101.0,569.3" fill="none" stroke="#2a6fe0" stroke-width="14" opacity="0.45" filter="url(#blur4)"/><ellipse cx="966.6" cy="531.7" rx="179.7" ry="138.4" transform="rotate(48.0 966.6 531.7)" fill="url(#bFrontRim)" stroke="#0a2a6e" stroke-width="1" /><path d="M1068.2,447.7 C1069.1,448.8 1071.9,452.1 1073.7,454.4 C1075.5,456.7 1077.3,459.0 1079.0,461.3 C1080.6,463.6 1082.3,466.0 1083.9,468.4 C1085.5,470.8 1087.0,473.2 1088.5,475.6 C1090.0,478.1 1091.5,480.5 1092.9,483.0 C1094.2,485.5 1095.6,488.0 1096.9,490.5 C1098.1,493.0 1099.4,495.6 1100.5,498.1 C1101.7,500.7 1102.8,503.3 1103.9,505.8 C1104.9,508.4 1105.9,511.0 1106.9,513.6 C1107.8,516.2 1108.7,518.8 1109.5,521.4 C1110.3,524.0 1111.1,526.7 1111.7,529.3 C1112.4,531.9 1113.1,534.5 1113.6,537.1 C1114.2,539.8 1114.7,542.4 1115.2,545.0 C1115.6,547.6 1116.0,550.2 1116.3,552.8 C1116.6,555.4 1116.9,558.0 1117.1,560.6 C1117.3,563.1 1117.4,567.0 1117.4,568.2" fill="none" stroke="#5a9bf8" stroke-width="3.4" stroke-linecap="round" opacity="0.95" filter="url(#blur2)"/><path d="M852.5,400.5 C854.7,399.0 861.1,394.0 865.7,391.2 C870.4,388.5 875.4,386.1 880.5,384.0 C885.6,382.0 890.9,380.3 896.4,378.9 C901.9,377.6 907.6,376.7 913.4,376.1 C919.2,375.5 925.1,375.4 931.1,375.6 C937.1,375.7 943.2,376.3 949.3,377.3 C955.4,378.2 961.6,379.6 967.7,381.3 C973.9,383.0 980.1,385.0 986.1,387.5 C992.2,389.9 998.3,392.7 1004.2,395.8 C1010.2,398.9 1016.0,402.3 1021.7,406.1 C1027.4,409.8 1033.0,413.9 1038.4,418.2 C1043.8,422.5 1051.4,429.7 1054.0,432.0" fill="none" stroke="#2a6be0" stroke-width="4" stroke-linecap="round" opacity="0.7" filter="url(#blur2)"/><ellipse cx="968.5" cy="530.5" rx="160.4" ry="127.5" transform="rotate(48.29471511186955 968.5 530.5)" fill="url(#bFace)" stroke="#07205a" stroke-width="0.9" /><ellipse cx="962.7" cy="534.2" rx="147.7" ry="119.7" transform="rotate(48.48938076728606 962.7 534.2)" fill="#0d3d9c" stroke="#07205a" stroke-width="0.8" /><ellipse cx="966.3" cy="531.9" rx="137.9" ry="113.5" transform="rotate(48.63885618126659 966.3 531.9)" fill="url(#bFaceB)" stroke="#07205a" stroke-width="0.8" /><ellipse cx="959.8" cy="536.2" rx="128.3" ry="107.2" transform="rotate(48.78572446593351 959.8 536.2)" fill="#0e3f9f" stroke="#07205a" stroke-width="0.8" /><ellipse cx="951.5" cy="541.6" rx="117.2" ry="99.6" transform="rotate(48.955187871318415 951.5 541.6)" fill="#0c3a94" stroke="#07205a" stroke-width="0.8" /><ellipse cx="945.3" cy="545.6" rx="107.7" ry="92.8" transform="rotate(49.1 945.3 545.6)" fill="url(#bFunnel)" stroke="#07205a" stroke-width="0.9" /><path d="M895.6,451.7 L902.0,449.2 L908.7,447.2 L915.6,445.7 L922.6,444.8 L929.8,444.5 L937.0,444.7 L944.3,445.4 L951.6,446.7 L958.9,448.5 L966.1,450.9 L973.1,453.7 L980.1,457.1 L986.8,461.0 L993.3,465.3 L999.6,470.0 L1005.5,475.2 L1011.2,480.7 L1016.4,486.6 L1021.3,492.8 L1025.8,499.3 L1029.8,506.1 L1033.4,513.0 L1036.5,520.2 L1039.1,527.4 L1041.2,534.8 L1042.7,542.3 L1043.8,549.7 L1044.3,557.1 L1044.2,564.5 L1043.7,571.8 L1042.6,578.9 L1040.9,585.8 L1038.8,592.6 L1036.1,599.0 L1032.9,605.2 L1029.3,611.1 L1025.2,616.6 L1020.7,621.7 L1015.8,626.4 L1010.4,630.7 L1002.0,602.0 L965.0,540.0 L907.0,472.0Z" fill="#0c3993" stroke="none" stroke-width="1" /><path d="M864.0,500.0 L880.0,460.0 L907.0,469.0 L905.0,480.0 L893.0,522.0Z" fill="#0c3993" stroke="#07205a" stroke-width="0.8" /><path d="M884.0,575.0 L904.0,560.0 L944.0,604.0 L928.0,619.0Z" fill="#0c3993" stroke="#07205a" stroke-width="0.8" /><path d="M981.0,617.0 L1024.0,593.0 L1035.0,612.0 L1027.0,628.0 L997.0,637.0Z" fill="#0c3993" stroke="#07205a" stroke-width="0.8" /><path d="M1036.0,556.0 L1043.0,545.0 L1042.0,580.0 L1036.0,590.0Z" fill="#0c3993" stroke="#07205a" stroke-width="0.8" /><path d="M1027.0,591.0 L1038.5,580.0 L1040.0,603.0 L1034.5,612.0Z" fill="#2b79ee" stroke="#07205a" stroke-width="0.6" /><path d="M892.0,527.0 C890.8,516.7 893.5,507.0 896.0,498.0 C898.5,489.0 902.2,479.7 907.0,473.0 C911.8,466.3 917.5,461.5 925.0,458.0 C932.5,454.5 942.0,451.7 952.0,452.0 C962.0,452.3 975.0,455.0 985.0,460.0 C995.0,465.0 1004.5,472.8 1012.0,482.0 C1019.5,491.2 1026.2,504.0 1030.0,515.0 C1033.8,526.0 1035.3,537.2 1035.0,548.0 C1034.7,558.8 1031.8,570.8 1028.0,580.0 C1024.2,589.2 1018.5,597.2 1012.0,603.0 C1005.5,608.8 998.0,613.7 989.0,615.0 C980.0,616.3 968.2,615.0 958.0,611.0 C947.8,607.0 937.2,599.5 928.0,591.0 C918.8,582.5 909.0,570.7 903.0,560.0 C897.0,549.3 893.2,537.3 892.0,527.0Z" fill="#0c3993" stroke="#07205a" stroke-width="0.8" /><path d="M897.0,532.0 C895.8,523.7 898.5,513.3 901.0,505.0 C903.5,496.7 907.5,488.2 912.0,482.0 C916.5,475.8 921.7,471.2 928.0,468.0 C934.3,464.8 941.3,462.8 950.0,463.0 C958.7,463.2 970.7,464.5 980.0,469.0 C989.3,473.5 998.7,481.5 1006.0,490.0 C1013.3,498.5 1020.2,510.0 1024.0,520.0 C1027.8,530.0 1029.2,540.3 1029.0,550.0 C1028.8,559.7 1026.5,570.2 1023.0,578.0 C1019.5,585.8 1014.3,592.3 1008.0,597.0 C1001.7,601.7 993.3,605.5 985.0,606.0 C976.7,606.5 966.7,604.3 958.0,600.0 C949.3,595.7 941.3,587.5 933.0,580.0 C924.7,572.5 914.0,563.0 908.0,555.0 C902.0,547.0 898.2,540.3 897.0,532.0Z" fill="url(#bBore)" stroke="#07205a" stroke-width="0.8" /><path d="M920.0,559.0 L941.0,543.0 L963.0,564.0 L943.0,581.0Z" fill="none" stroke="#0a2f7a" stroke-width="0.8" /><path d="M904.0,497.0 L906.0,484.0 L925.0,484.0Z" fill="#3b86f5" stroke="#0a2f7a" stroke-width="0.7" /><path d="M1000.0,598.0 L1022.0,584.0 L1026.0,590.0Z" fill="#3b86f5" stroke="#0a2f7a" stroke-width="0.7" /><path d="M924.0,489.0 C924.5,487.7 925.5,483.7 927.0,481.0 C928.5,478.3 928.8,475.5 933.0,473.0 C937.2,470.5 945.3,466.8 952.0,466.0 C958.7,465.2 965.8,466.2 973.0,468.0 C980.2,469.8 988.3,472.2 995.0,477.0 C1001.7,481.8 1007.7,488.7 1013.0,497.0 C1018.3,505.3 1024.2,517.7 1027.0,527.0 C1029.8,536.3 1030.0,546.0 1030.0,553.0 C1030.0,560.0 1027.5,566.3 1027.0,569.0 L1027.0,569.0 C1024.7,570.7 1018.0,577.2 1013.0,579.0 C1008.0,580.8 1002.7,581.2 997.0,580.0 C991.3,578.8 985.2,576.5 979.0,572.0 C972.8,567.5 965.8,559.7 960.0,553.0 C954.2,546.3 948.8,539.5 944.0,532.0 C939.2,524.5 934.0,514.0 931.0,508.0 C928.0,502.0 927.2,499.2 926.0,496.0 C924.8,492.8 924.3,490.2 924.0,489.0Z" fill="url(#gDisc)" stroke="#222" stroke-width="0.9" /><ellipse cx="991.0" cy="510.5" rx="16.5" ry="14.8" transform="rotate(40 991.0 510.5)" fill="#f4f4f4" stroke="#222" stroke-width="0.8" /><ellipse cx="993.0" cy="509.0" rx="14.2" ry="12.5" transform="rotate(40 993.0 509.0)" fill="url(#bHole)" stroke="#07205a" stroke-width="0.7" /><path d="M1200.7,488.9 L1193.3,484.0 L1208.0,462.0 L1227.6,440.0 L1247.1,440.0 L1234.9,454.7 L1225.1,469.3 L1217.8,481.6Z" fill="#cdcdcd" stroke="none" stroke-width="1" /><path d="M1227.6,440.0 C1224.3,443.7 1213.7,454.7 1208.0,462.0 C1202.3,469.3 1194.6,479.5 1193.3,484.0 C1192.1,488.5 1196.6,489.3 1200.7,488.9 C1204.8,488.5 1214.9,482.8 1217.8,481.6" fill="none" stroke="#2a2a2a" stroke-width="0.7" /><path d="M1247.1,440.0 C1245.1,442.4 1238.6,449.8 1234.9,454.7 C1231.2,459.6 1228.0,464.9 1225.1,469.3 C1222.3,473.8 1219.0,479.5 1217.8,481.6" fill="none" stroke="#2a2a2a" stroke-width="0.7" /><path d="M1217.8,481.6 L1225.1,469.3 L1234.9,454.7 L1247.1,440.0 L1300.9,440.0 L1288.7,452.2 L1276.5,455.9 L1266.7,462.0 L1256.9,466.9 L1237.4,474.2Z" fill="#e7e7e7" stroke="none" stroke-width="1" /><path d="M1300.9,440.0 C1298.9,442.0 1292.8,449.6 1288.7,452.2 C1284.6,454.9 1278.5,455.3 1276.5,455.9" fill="none" stroke="#2a2a2a" stroke-width="0.7" /><path d="M1227.6,466.9 C1230.8,464.9 1240.6,457.1 1247.1,454.7 C1253.7,452.2 1260.2,451.8 1266.7,452.2 C1273.2,452.6 1283.0,456.3 1286.3,457.1" fill="none" stroke="#2a2a2a" stroke-width="0.6" /><path d="M1151.8,554.9 C1143.4,557.4 1144.9,570.0 1143.2,576.9 C1141.6,583.8 1141.4,590.8 1142.0,596.5 C1142.6,602.2 1144.9,607.1 1146.9,611.1 C1148.9,615.2 1150.6,617.5 1154.2,620.9 C1157.9,624.4 1162.4,628.9 1168.9,631.9 C1175.4,635.0 1186.4,637.8 1193.3,639.3 C1200.3,640.8 1205.2,641.2 1210.5,641.0 C1215.8,640.8 1220.2,639.8 1225.1,638.0 C1230.0,636.3 1236.1,633.6 1239.8,630.7 C1243.5,627.9 1245.1,624.6 1247.1,620.9 C1249.2,617.3 1250.8,612.8 1252.0,608.7 C1253.3,604.6 1254.1,600.1 1254.5,596.5 C1254.8,592.8 1256.0,590.0 1254.0,586.7 C1251.9,583.4 1252.4,581.0 1242.2,576.9 C1232.1,572.8 1208.4,565.9 1193.3,562.2 C1178.3,558.6 1160.1,552.5 1151.8,554.9Z" fill="url(#gRoll)" stroke="#2a2a2a" stroke-width="0.8" /><path d="M1151.8,554.9 C1152.6,557.0 1153.8,562.9 1156.7,567.1 C1159.5,571.4 1162.8,576.3 1168.9,580.6 C1175.0,584.9 1185.2,590.0 1193.3,592.8 C1201.5,595.7 1210.5,597.1 1217.8,597.7 C1225.1,598.3 1231.3,598.0 1237.4,596.5 C1243.4,595.0 1251.2,590.0 1254.0,588.7 L1255.0,579.9 C1252.8,580.8 1247.6,584.3 1242.2,585.7 C1236.9,587.1 1230.0,588.4 1222.7,588.2 C1215.4,587.9 1205.8,586.5 1198.2,584.3 C1190.7,582.0 1182.8,578.0 1177.5,574.5 C1172.1,570.9 1168.5,566.3 1166.0,563.0 C1163.4,559.6 1162.7,555.9 1162.1,554.4Z" fill="#ebebeb" stroke="#2a2a2a" stroke-width="0.7" /><path d="M1255.0,579.9 C1252.8,580.8 1247.6,584.3 1242.2,585.7 C1236.9,587.1 1230.0,588.4 1222.7,588.2 C1215.4,587.9 1205.8,586.5 1198.2,584.3 C1190.7,582.0 1182.8,578.0 1177.5,574.5 C1172.1,570.9 1168.5,566.3 1166.0,563.0 C1163.4,559.6 1162.7,555.9 1162.1,554.4 L1162.1,554.4 L1160.3,547.6 L1160.3,547.6 C1161.8,550.0 1164.2,557.4 1168.9,562.2 C1173.6,567.1 1181.1,573.5 1188.5,576.9 C1195.8,580.4 1206.0,581.8 1212.9,583.0 C1219.8,584.3 1223.5,584.9 1230.0,584.3 C1236.5,583.6 1248.4,580.2 1252.0,579.4 L1252.0,579.4 L1255.0,579.9Z" fill="#aeaca1" stroke="#2a2a2a" stroke-width="0.6" /><path d="M1165.2,562.2 C1167.5,564.2 1173.2,570.7 1178.7,574.0 C1184.2,577.2 1190.9,579.9 1198.2,581.8 C1205.6,583.8 1215.4,585.3 1222.7,585.7 C1230.0,586.1 1237.2,585.1 1242.2,584.3 C1247.3,583.4 1251.4,581.2 1253.3,580.6" fill="none" stroke="#8e8c82" stroke-width="1.2" /><path d="M1256.9,508.5 C1254.7,503.4 1253.3,497.9 1253.3,492.6 C1253.3,487.3 1254.7,481.8 1256.9,476.7 C1259.2,471.6 1263.4,465.5 1266.7,462.0 C1270.0,458.5 1272.4,457.1 1276.5,455.9 C1280.6,454.7 1286.3,453.2 1291.1,454.7 C1296.0,456.1 1301.7,460.4 1305.8,464.4 C1309.9,468.5 1313.2,473.4 1315.6,479.1 C1318.0,484.8 1319.9,491.8 1320.5,498.7 C1321.1,505.6 1320.5,513.3 1319.3,520.7 C1318.0,528.0 1315.8,535.8 1313.2,542.7 C1310.5,549.6 1307.0,556.1 1303.4,562.2 C1299.7,568.4 1295.6,574.5 1291.1,579.4 C1286.7,584.3 1280.6,588.9 1276.5,591.6 C1272.4,594.2 1269.6,595.7 1266.7,595.3 C1263.8,594.8 1261.0,592.2 1259.4,589.1 C1257.7,586.1 1256.1,582.6 1256.9,576.9 C1257.7,571.2 1261.0,562.7 1264.3,554.9 C1267.5,547.2 1276.1,535.8 1276.5,530.5 C1276.9,525.2 1270.0,526.8 1266.7,523.1 C1263.4,519.5 1259.2,513.6 1256.9,508.5Z" fill="url(#gEye)" stroke="#2a2a2a" stroke-width="0.8" /><path d="M1281.4,510.9 C1283.6,505.2 1287.5,500.9 1291.1,498.7 C1294.8,496.4 1299.7,495.8 1303.4,497.5 C1307.0,499.1 1311.3,503.4 1313.2,508.5 C1315.0,513.6 1315.2,521.5 1314.4,528.0 C1313.6,534.5 1311.3,541.9 1308.3,547.6 C1305.2,553.3 1300.1,559.0 1296.0,562.2 C1292.0,565.5 1286.7,568.4 1283.8,567.1 C1281.0,565.9 1279.9,560.6 1278.9,554.9 C1277.9,549.2 1277.3,540.2 1277.7,532.9 C1278.1,525.6 1279.1,516.6 1281.4,510.9Z" fill="url(#gEyeIn)" stroke="#2a2a2a" stroke-width="0.8" /><path d="M1302.2,498.7 C1303.2,501.1 1307.2,507.6 1308.3,513.3 C1309.4,519.1 1309.6,526.8 1308.8,532.9 C1307.9,539.0 1306.3,544.5 1303.4,550.0 C1300.4,555.5 1293.2,563.3 1291.1,565.9" fill="none" stroke="#2a2a2a" stroke-width="0.7" /><ellipse cx="1286.600" cy="525.600" rx="6.400" ry="13.600" transform="rotate(12 1286.600 525.600)" fill="#d2d2d2" stroke="#2a2a2a" stroke-width="0.700"/><ellipse cx="1285.800" cy="526" rx="3.400" ry="8" transform="rotate(12 1285.800 526)" fill="#8c8c8c" stroke="#555" stroke-width="0.600"/><path d="M1256.9,508.5 C1256.9,510.5 1263.4,519.5 1266.7,523.1 C1270.0,526.8 1276.1,526.4 1276.5,530.5 C1276.9,534.5 1271.2,543.5 1269.1,547.6 C1267.1,551.7 1265.7,550.8 1264.3,554.9 C1262.8,559.0 1261.4,566.3 1260.6,572.0 C1259.8,577.7 1258.3,585.3 1259.4,589.1 C1260.4,593.0 1263.8,594.8 1266.7,595.3 C1269.6,595.7 1274.0,594.6 1276.5,591.6 C1278.9,588.5 1281.4,582.6 1281.4,576.9 C1281.4,571.2 1276.9,563.9 1276.5,557.4 C1276.1,550.8 1278.9,543.9 1278.9,537.8 C1278.9,531.7 1278.5,525.2 1276.5,520.7 C1274.4,516.2 1270.0,512.9 1266.7,510.9 C1263.4,508.9 1256.9,506.4 1256.9,508.5Z" fill="#c4c4c4" stroke="#2a2a2a" stroke-width="0.7" /><path d="M1165.2,515.8 C1165.8,518.6 1165.8,527.6 1168.9,532.9 C1172.0,538.2 1177.9,543.5 1183.6,547.6 C1189.3,551.7 1196.2,555.1 1203.1,557.4 C1210.1,559.6 1217.8,560.8 1225.1,561.0 C1232.5,561.2 1240.6,559.8 1247.1,558.6 C1253.7,557.4 1261.4,554.5 1264.3,553.7 L1264.3,554.9 C1263.8,557.8 1263.8,568.0 1261.8,572.0 C1259.8,576.1 1257.3,577.3 1252.0,579.4 C1246.7,581.4 1236.5,583.6 1230.0,584.3 C1223.5,584.9 1219.8,584.3 1212.9,583.0 C1206.0,581.8 1195.8,580.4 1188.5,576.9 C1181.1,573.5 1173.8,568.0 1168.9,562.2 C1164.0,556.5 1160.7,548.4 1159.1,542.7 C1157.5,537.0 1158.1,532.9 1159.1,528.0 C1160.1,523.1 1164.2,515.8 1165.2,513.3Z" fill="url(#gHeadS)" stroke="#2a2a2a" stroke-width="0.8" /><path d="M1165.2,515.8 C1165.2,510.9 1166.3,506.8 1168.9,503.6 C1171.5,500.3 1175.8,498.7 1181.1,496.2 C1186.4,493.8 1194.6,491.3 1200.7,488.9 C1206.8,486.5 1211.7,484.0 1217.8,481.6 C1223.9,479.1 1230.8,476.7 1237.4,474.2 C1243.9,471.8 1252.0,468.9 1256.9,466.9 C1261.8,464.9 1266.7,460.4 1266.7,462.0 C1266.7,463.6 1259.2,471.6 1256.9,476.7 C1254.7,481.8 1253.3,487.3 1253.3,492.6 C1253.3,497.9 1254.7,503.4 1256.9,508.5 C1259.2,513.6 1263.4,519.5 1266.7,523.1 C1270.0,526.8 1276.1,526.4 1276.5,530.5 C1276.9,534.5 1271.2,543.7 1269.1,547.6 C1267.1,551.5 1267.9,551.9 1264.3,553.7 C1260.6,555.5 1253.7,557.4 1247.1,558.6 C1240.6,559.8 1232.5,561.2 1225.1,561.0 C1217.8,560.8 1210.1,559.6 1203.1,557.4 C1196.2,555.1 1189.3,551.7 1183.6,547.6 C1177.9,543.5 1172.0,538.2 1168.9,532.9 C1165.8,527.6 1165.2,520.7 1165.2,515.8Z" fill="url(#gHeadT)" stroke="#2a2a2a" stroke-width="0.8" /><path d="M1181.1,496.2 C1184.4,497.0 1193.8,498.7 1200.7,501.1 C1207.6,503.6 1216.6,507.2 1222.7,510.9 C1228.8,514.6 1233.3,519.1 1237.4,523.1 C1241.4,527.2 1245.5,533.3 1247.1,535.4" fill="none" stroke="#2a2a2a" stroke-width="0.6" /><path d="M1253.3,492.6 C1252.2,494.4 1249.0,499.3 1247.1,503.6 C1245.3,507.8 1242.7,513.3 1242.2,518.2 C1241.8,523.1 1242.2,528.8 1244.7,532.9 C1247.1,537.0 1252.8,540.2 1256.9,542.7 C1261.0,545.1 1267.1,546.8 1269.1,547.6" fill="none" stroke="#2a2a2a" stroke-width="0.6" /><ellipse cx="1217.800" cy="522" rx="22.500" ry="12.600" transform="rotate(10 1217.800 522)" fill="#d6d6d6" stroke="#2a2a2a" stroke-width="0.800"/><ellipse cx="1219" cy="524" rx="17" ry="9" transform="rotate(10 1219 524)" fill="#e6e6e6" stroke="none"/><ellipse cx="1217.600" cy="523.600" rx="9.300" ry="6" transform="rotate(6 1217.600 523.600)" fill="#7d7d7d" stroke="#444" stroke-width="0.700"/></svg>
<div style="left:0px;top:0px;width:1600px;height:37px;background:#f9f9fa;"></div>
<div style="left:0px;top:37px;width:1600px;height:1px;background:#e3e3e3;"></div>
<div style="left:0px;top:38px;width:36px;height:862px;background:#f9f9fa;"></div>
<div style="left:36px;top:38px;width:1px;height:862px;background:#e0e0e0;"></div>
<div style="left:0px;top:38px;width:3px;height:28px;background:#1b5faa;"></div>
<div style="left:37px;top:38px;width:348px;height:834px;background:#fff;"></div>
<div style="left:385px;top:38px;width:1px;height:862px;background:#d9d9d9;"></div>
<div style="left:37px;top:38px;width:348px;height:32px;background:#f9f9f9;"></div>
<div style="left:37px;top:70px;width:348px;height:1px;background:#dedede;"></div>
<div style="left:386px;top:872px;width:1213px;height:26.5px;background:#d2d2d2;"></div>
<div style="left:37px;top:871px;width:348px;height:1px;background:#d9d9d9;"></div>
<div style="left:37px;top:872px;width:348px;height:26px;background:#ececec;"></div>
<div style="left:0px;top:898px;width:1600px;height:2px;background:#f4f4f4;"></div>
<span class="t" style="left:29px;top:9.53px;font-size:16.5px;line-height:16.5px;color:#767676;transform:scaleX(0.9793);">onshape</span>
<div style="left:103px;top:12px;width:15px;height:3px;background:#2b2b2b;"></div>
<div style="left:103px;top:17.5px;width:15px;height:3px;background:#2b2b2b;"></div>
<div style="left:103px;top:23px;width:15px;height:3px;background:#2b2b2b;"></div>
<span class="t" style="left:130px;top:9.07px;font-size:20px;line-height:20px;color:#222;font-weight:bold;transform:scaleX(0.9587);">Fishing Reel</span>
<span class="t" style="left:252px;top:13.30px;font-size:15px;line-height:15px;color:#666;transform:scaleX(0.9535);">Main</span>
<span class="t" style="left:337px;top:12.30px;font-size:15px;line-height:15px;color:#858585;transform:scaleX(0.9649);">Assemblies</span>
<div style="left:1341px;top:3px;width:54px;height:29px;background:#1a5bb5;border-radius:5px;"></div>
<span class="t" style="left:1351px;top:11.15px;font-size:14px;line-height:14px;color:#fff;font-weight:bold;transform:scaleX(0.8738);">Share</span>
<span class="t" style="left:1473px;top:11.65px;font-size:14px;line-height:14px;color:#444;-webkit-text-stroke:0.22px;transform:scaleX(0.9071);">Onshape Instructor</span>
<span class="t" style="left:42px;top:46.65px;font-size:14px;line-height:14px;color:#222;font-weight:bold;transform:scaleX(0.9077);">Versions and history</span>
<div style="left:46px;top:76px;width:329px;height:26px;border:1px solid #b8b8b8;border-radius:3px;background:#fff;"></div>
<div style="left:347px;top:77px;width:1px;height:24px;background:#c8c8c8;"></div>
<span class="t" style="left:58px;top:83.00px;font-size:13px;line-height:13px;color:#8a8a8a;-webkit-text-stroke:0.22px;font-style:italic;transform:scaleX(0.9508);">Search history</span>
<span class="t" style="left:170px;top:122.00px;font-size:13px;line-height:13px;color:#222;font-weight:bold;transform:scaleX(0.9603);">Name</span>
<span class="t" style="left:277px;top:122.00px;font-size:13px;line-height:13px;color:#222;font-weight:bold;transform:scaleX(0.9544);">Modified</span>
<div style="left:37px;top:141px;width:348px;height:1px;background:#dcdcdc;"></div>
<div style="left:170px;top:146px;width:35px;height:20px;background:#cfe0f6;border:1px solid #5d8fd2;border-radius:3px;"></div>
<span class="t" style="left:173.5px;top:149.30px;font-size:13px;line-height:13px;color:#222;font-weight:bold;transform:scaleX(0.9118);">Main</span>
<span class="t" style="left:181.7px;top:168.80px;font-size:13px;line-height:13px;color:#707070;-webkit-text-stroke:0.22px;transform:scaleX(0.9447);">12 changes</span>
<div style="left:277px;top:142px;width:106px;height:45px;overflow:hidden;">
<span class="t" style="left:0.7px;top:7.50px;font-size:13px;line-height:13px;color:#777;-webkit-text-stroke:0.22px;transform:scaleX(0.9769);">Onshape Instructor</span>
<span class="t" style="left:0.7px;top:26.80px;font-size:13px;line-height:13px;color:#777;-webkit-text-stroke:0.22px;transform:scaleX(0.9632);">6:04 PM Today</span>
</div>
<div style="left:37px;top:187px;width:348px;height:1px;background:#dcdcdc;"></div>
<div style="left:37px;top:188px;width:348px;height:330px;background:#f4f4f4;"></div>
<div style="left:37px;top:271px;width:348px;height:27px;background:#b0dcf4;"></div>
<span class="t" style="left:169.8px;top:196.30px;font-size:13px;line-height:13px;color:#707070;-webkit-text-stroke:0.22px;transform:scaleX(0.9369);">Spool :: Delete : Move face 5</span>
<span class="t" style="left:169.8px;top:223.80px;font-size:13px;line-height:13px;color:#707070;-webkit-text-stroke:0.22px;transform:scaleX(0.9420);">Spool :: Edit : Sketch 76</span>
<span class="t" style="left:169.8px;top:251.30px;font-size:13px;line-height:13px;color:#707070;-webkit-text-stroke:0.22px;transform:scaleX(0.9506);">Spool :: Edit : Extrude 49</span>
<span class="t" style="left:169.8px;top:278.80px;font-size:13px;line-height:13px;color:#707070;-webkit-text-stroke:0.22px;transform:scaleX(0.9296);">Spool :: Edit : Revolve 14</span>
<span class="t" style="left:169.8px;top:306.30px;font-size:13px;line-height:13px;color:#707070;-webkit-text-stroke:0.22px;transform:scaleX(0.9466);">Spool :: Delete : Sketch 35</span>
<span class="t" style="left:169.8px;top:333.80px;font-size:13px;line-height:13px;color:#707070;-webkit-text-stroke:0.22px;transform:scaleX(0.9576);">Spool :: Delete : Fillet 8</span>
<span class="t" style="left:169.8px;top:361.30px;font-size:13px;line-height:13px;color:#707070;-webkit-text-stroke:0.22px;transform:scaleX(0.9479);">Spool :: Delete : Extrude 24</span>
<span class="t" style="left:169.8px;top:388.80px;font-size:13px;line-height:13px;color:#707070;-webkit-text-stroke:0.22px;transform:scaleX(0.9374);">Spool :: Edit : Plane 9</span>
<span class="t" style="left:169.8px;top:416.30px;font-size:13px;line-height:13px;color:#707070;-webkit-text-stroke:0.22px;transform:scaleX(0.9420);">Spool :: Edit : Sketch 75</span>
<span class="t" style="left:169.8px;top:443.80px;font-size:13px;line-height:13px;color:#707070;-webkit-text-stroke:0.22px;transform:scaleX(0.9312);">Spool :: Rename : Move face 5</span>
<span class="t" style="left:169.8px;top:471.30px;font-size:13px;line-height:13px;color:#707070;-webkit-text-stroke:0.22px;transform:scaleX(0.9625);">Spool :: Insert feature : Delete part 7</span>
<span class="t" style="left:169.8px;top:498.80px;font-size:13px;line-height:13px;color:#707070;-webkit-text-stroke:0.22px;transform:scaleX(0.9367);">Spool :: Edit : Sketch 1</span>
<div style="left:37px;top:518px;width:348px;height:1px;background:#dcdcdc;"></div>
<span class="t" style="left:170px;top:527.00px;font-size:13px;line-height:13px;color:#222;font-weight:bold;transform:scaleX(0.9622);">Start</span>
<div style="left:277px;top:519px;width:106px;height:45px;overflow:hidden;">
<span class="t" style="left:0.7px;top:7.80px;font-size:13px;line-height:13px;color:#777;-webkit-text-stroke:0.22px;transform:scaleX(0.9769);">Onshape Instructor</span>
<span class="t" style="left:0.7px;top:27.00px;font-size:13px;line-height:13px;color:#777;-webkit-text-stroke:0.22px;transform:scaleX(0.9632);">6:00 PM Today</span>
</div>
<span class="t" style="left:18px;top:301.57px;font-size:26.5px;line-height:26.5px;color:#f20d0d;font-weight:bold;transform:scaleX(0.9803);-webkit-text-stroke:0.5px #f20d0d;">Actions to</span>
<span class="t" style="left:31px;top:333.97px;font-size:26.5px;line-height:26.5px;color:#f20d0d;font-weight:bold;transform:scaleX(0.9893);-webkit-text-stroke:0.5px #f20d0d;">Remove</span>
<svg style="left:90.5px;top:147px;" width="20" height="400" viewBox="0 0 20 400"><circle cx="10" cy="51.75" r="2.1" fill="#1b5faa"/><line x1="10" y1="57.75" x2="10" y2="73.75" stroke="#1b5faa" stroke-width="2"/><circle cx="10" cy="79.25" r="2.1" fill="#1b5faa"/><line x1="10" y1="85.25" x2="10" y2="101.25" stroke="#1b5faa" stroke-width="2"/><circle cx="10" cy="106.75" r="2.1" fill="#1b5faa"/><line x1="10" y1="112.75" x2="10" y2="128.75" stroke="#1b5faa" stroke-width="2"/><circle cx="10" cy="134.25" r="2.1" fill="#1b5faa"/><line x1="10" y1="140.25" x2="10" y2="156.25" stroke="#1b5faa" stroke-width="2"/><circle cx="10" cy="161.75" r="2.1" fill="#1b5faa"/><line x1="10" y1="167.75" x2="10" y2="183.75" stroke="#1b5faa" stroke-width="2"/><circle cx="10" cy="189.25" r="2.1" fill="#1b5faa"/><line x1="10" y1="195.25" x2="10" y2="211.25" stroke="#1b5faa" stroke-width="2"/><circle cx="10" cy="216.75" r="2.1" fill="#1b5faa"/><line x1="10" y1="222.75" x2="10" y2="238.75" stroke="#1b5faa" stroke-width="2"/><circle cx="10" cy="244.25" r="2.1" fill="#1b5faa"/><line x1="10" y1="250.25" x2="10" y2="266.25" stroke="#1b5faa" stroke-width="2"/><circle cx="10" cy="271.75" r="2.1" fill="#1b5faa"/><line x1="10" y1="277.75" x2="10" y2="293.75" stroke="#1b5faa" stroke-width="2"/><circle cx="10" cy="299.25" r="2.1" fill="#1b5faa"/><line x1="10" y1="305.25" x2="10" y2="321.25" stroke="#1b5faa" stroke-width="2"/><circle cx="10" cy="326.75" r="2.1" fill="#1b5faa"/><line x1="10" y1="332.75" x2="10" y2="348.75" stroke="#1b5faa" stroke-width="2"/><circle cx="10" cy="354.25" r="2.1" fill="#1b5faa"/><line x1="10" y1="360.25" x2="10" y2="381" stroke="#1b5faa" stroke-width="2"/><line x1="10" y1="12" x2="10" y2="46.5" stroke="#1b5faa" stroke-width="2"/><circle cx="10" cy="7" r="5.5" fill="#fff" stroke="#1b5faa" stroke-width="2"/><circle cx="10" cy="384.75" r="5.3" fill="#1b5faa"/><line x1="4.8" y1="391.20000000000005" x2="15.6" y2="391.20000000000005" stroke="#1b5faa" stroke-width="1.5"/></svg>
<div style="left:102px;top:771px;width:74px;height:20px;background:#cfe0f6;border:1px solid #5d8fd2;border-radius:3px;"></div>
<span class="t" style="left:107px;top:774.70px;font-size:13px;line-height:13px;color:#222;font-weight:bold;transform:scaleX(0.9259);">Workspace</span>
<span class="t" style="left:218px;top:774.70px;font-size:13px;line-height:13px;color:#222;font-weight:bold;transform:scaleX(0.9369);">Version</span>
<span class="t" style="left:305px;top:774.70px;font-size:13px;line-height:13px;color:#8a8a8a;-webkit-text-stroke:0.22px;transform:scaleX(0.9333);">Change</span>
<span class="t" style="left:103px;top:804.00px;font-size:13px;line-height:13px;color:#222;font-weight:bold;transform:scaleX(0.9344);">Release candidate</span>
<span class="t" style="left:252px;top:804.00px;font-size:13px;line-height:13px;color:#222;font-weight:bold;transform:scaleX(0.9461);">Release</span>
<span class="t" style="left:103px;top:834.00px;font-size:13px;line-height:13px;color:#222;font-weight:bold;transform:scaleX(0.9204);">Contains obsoletion</span>
<span class="t" style="left:261px;top:834.00px;font-size:13px;line-height:13px;color:#222;font-weight:bold;transform:scaleX(0.9258);">Automatic version</span>
<span class="t" style="left:41px;top:879.69px;font-size:11px;line-height:11px;color:#7a7a7a;-webkit-text-stroke:0.22px;transform:scaleX(0.9141);">Right-click on a row to perform actions</span>
<span class="t" style="left:394px;top:46.17px;font-size:13.5px;line-height:13.5px;color:#333;font-weight:bold;transform:scaleX(0.8959);">Viewing Spool :: Edit : Revolve 14</span>
<div style="left:597px;top:44px;width:1px;height:19px;background:#c8c8c8;"></div>
<span class="t" style="left:606px;top:46.17px;font-size:13.5px;line-height:13.5px;color:#1b5faa;font-weight:bold;transform:scaleX(0.9085);">Restore to Main</span>
<div style="left:707px;top:44px;width:1px;height:19px;background:#c8c8c8;"></div>
<span class="t" style="left:716px;top:46.17px;font-size:13.5px;line-height:13.5px;color:#1b5faa;font-weight:bold;transform:scaleX(0.9101);">Return to Main</span>
<div style="left:386px;top:70px;width:189px;height:802px;background:#fff;border:1px solid #cfcfcf;border-bottom:none;border-left:none;"></div>
<span class="t" style="left:390px;top:78.64px;font-size:12px;line-height:12px;color:#222;font-weight:bold;transform:scaleX(0.9832);">Features (274)</span>
<div style="left:422px;top:100px;width:145px;height:28px;border:1px solid #c4c4c4;border-radius:3px;background:#fff;"></div>
<span class="t" style="left:427px;top:107.50px;font-size:13px;line-height:13px;color:#8a8a8a;-webkit-text-stroke:0.22px;font-style:italic;transform:scaleX(0.8988);">Filter by name or type</span>
<div style="left:555px;top:128px;width:14px;height:462px;background:#f1f1f1;"></div>
<div style="left:557px;top:142px;width:10px;height:30px;background:#c1c1c1;"></div>
<div style="left:387px;top:590px;width:187px;height:1px;background:#cfcfcf;"></div>
<span class="t" style="left:407px;top:133.64px;font-size:12px;line-height:12px;color:#444;-webkit-text-stroke:0.22px;transform:scaleX(1.0287);">Default geometry</span>
<span class="t" style="left:427px;top:157.47px;font-size:12px;line-height:12px;color:#aaa;-webkit-text-stroke:0.22px;transform:scaleX(1.0153);">Origin</span>
<span class="t" style="left:427px;top:181.30px;font-size:12px;line-height:12px;color:#aaa;-webkit-text-stroke:0.22px;transform:scaleX(1.0596);">Top</span>
<span class="t" style="left:427px;top:205.13px;font-size:12px;line-height:12px;color:#aaa;-webkit-text-stroke:0.22px;transform:scaleX(1.0533);">Front</span>
<span class="t" style="left:427px;top:228.96px;font-size:12px;line-height:12px;color:#aaa;-webkit-text-stroke:0.22px;transform:scaleX(1.0174);">Right</span>
<span class="t" style="left:410px;top:252.79px;font-size:12px;line-height:12px;color:#aaa;-webkit-text-stroke:0.22px;transform:scaleX(0.9637);">Sketch 1</span>
<span class="t" style="left:410px;top:276.62px;font-size:12px;line-height:12px;color:#333;-webkit-text-stroke:0.22px;transform:scaleX(0.9558);">Revolve 1</span>
<span class="t" style="left:410px;top:300.45px;font-size:12px;line-height:12px;color:#aaa;-webkit-text-stroke:0.22px;transform:scaleX(0.9851);">Sketch 2</span>
<span class="t" style="left:410px;top:324.28px;font-size:12px;line-height:12px;color:#aaa;-webkit-text-stroke:0.22px;transform:scaleX(0.9583);">Plane 1</span>
<span class="t" style="left:410px;top:348.11px;font-size:12px;line-height:12px;color:#aaa;-webkit-text-stroke:0.22px;transform:scaleX(0.9851);">Sketch 3</span>
<span class="t" style="left:410px;top:371.94px;font-size:12px;line-height:12px;color:#333;-webkit-text-stroke:0.22px;transform:scaleX(0.9929);">Extrude 1</span>
<span class="t" style="left:410px;top:395.77px;font-size:12px;line-height:12px;color:#aaa;-webkit-text-stroke:0.22px;transform:scaleX(0.9851);">Sketch 4</span>
<span class="t" style="left:410px;top:419.60px;font-size:12px;line-height:12px;color:#333;-webkit-text-stroke:0.22px;transform:scaleX(0.9636);">Sweep 1</span>
<span class="t" style="left:410px;top:443.43px;font-size:12px;line-height:12px;color:#333;-webkit-text-stroke:0.22px;transform:scaleX(0.9744);">Replace face 1</span>
<span class="t" style="left:410px;top:467.26px;font-size:12px;line-height:12px;color:#aaa;-webkit-text-stroke:0.22px;transform:scaleX(0.9851);">Sketch 5</span>
<span class="t" style="left:410px;top:491.09px;font-size:12px;line-height:12px;color:#333;-webkit-text-stroke:0.22px;transform:scaleX(1.0124);">Extrude 2</span>
<span class="t" style="left:410px;top:514.92px;font-size:12px;line-height:12px;color:#aaa;-webkit-text-stroke:0.22px;transform:scaleX(0.9851);">Sketch 6</span>
<span class="t" style="left:410px;top:538.75px;font-size:12px;line-height:12px;color:#aaa;-webkit-text-stroke:0.22px;transform:scaleX(0.9851);">Sketch 7</span>
<span class="t" style="left:410px;top:562.58px;font-size:12px;line-height:12px;color:#333;-webkit-text-stroke:0.22px;transform:scaleX(1.0045);">Split 1</span>
<div style="left:387px;top:583px;width:168px;height:7px;overflow:hidden;">
<span class="t" style="left:23px;top:2.84px;font-size:12px;line-height:12px;color:#aaa;-webkit-text-stroke:0.22px;transform:scaleX(0.9851);">Sketch 8</span>
</div>
<span class="t" style="left:407px;top:596.74px;font-size:12px;line-height:12px;color:#444;-webkit-text-stroke:0.22px;transform:scaleX(1.0106);">Parts (9)</span>
<span class="t" style="left:427px;top:620.74px;font-size:12px;line-height:12px;color:#444;-webkit-text-stroke:0.22px;transform:scaleX(1.0224);">Rotor</span>
<span class="t" style="left:427px;top:644.54px;font-size:12px;line-height:12px;color:#444;-webkit-text-stroke:0.22px;transform:scaleX(1.0060);">Lock Washer</span>
<span class="t" style="left:427px;top:668.34px;font-size:12px;line-height:12px;color:#444;-webkit-text-stroke:0.22px;transform:scaleX(0.9996);">Spring Cover</span>
<span class="t" style="left:427px;top:692.14px;font-size:12px;line-height:12px;color:#444;-webkit-text-stroke:0.22px;transform:scaleX(1.0101);">Spool</span>
<span class="t" style="left:427px;top:715.94px;font-size:12px;line-height:12px;color:#444;-webkit-text-stroke:0.22px;transform:scaleX(1.0025);">Washer</span>
<span class="t" style="left:427px;top:739.74px;font-size:12px;line-height:12px;color:#444;-webkit-text-stroke:0.22px;transform:scaleX(1.0519);">Bail Arm</span>
<span class="t" style="left:427px;top:763.54px;font-size:12px;line-height:12px;color:#444;-webkit-text-stroke:0.22px;transform:scaleX(1.0199);">Line Roller</span>
<span class="t" style="left:427px;top:787.34px;font-size:12px;line-height:12px;color:#444;-webkit-text-stroke:0.22px;transform:scaleX(1.0090);">Line Roller Bushing</span>
<span class="t" style="left:427px;top:811.14px;font-size:12px;line-height:12px;color:#444;-webkit-text-stroke:0.22px;transform:scaleX(1.0151);">Bail Wire Holder</span>
<span class="t" style="left:407px;top:834.84px;font-size:12px;line-height:12px;color:#444;-webkit-text-stroke:0.22px;transform:scaleX(0.9910);">Surfaces (11)</span>
<div style="left:575px;top:447px;width:30px;height:32px;background:#fff;border:1px solid #ddd;border-left:none;"></div>
<div style="left:387px;top:872px;width:26px;height:25px;background:#c8c8c8;"></div>
<div style="left:413px;top:872px;width:36px;height:25px;background:#e2e2e2;"></div>
<svg style="left:447px;top:872px;" width="92" height="25" viewBox="0 0 92 25"><path d="M0 0 H2 L8 12.500 L2 25 H0z" fill="#e2e2e2"/><path d="M2 0 H83 L89 12.500 L83 25 H2 L8 12.500z" fill="#fff"/><path d="M83 0 L89 12.500 L83 25" fill="none" stroke="#c0c0c0" stroke-width="1"/><path d="M2 0 L8 12.500 L2 25" fill="none" stroke="#c9c9c9" stroke-width="1"/></svg>
<span class="t" style="left:487px;top:877.07px;font-size:13.5px;line-height:13.5px;color:#555;-webkit-text-stroke:0.22px;transform:scaleX(0.9521);">Parts</span>
<div style="left:538px;top:872px;width:182px;height:25px;background:#e8e8e8;border-radius:0 0 6px 6px;border:1px solid #c4c4c4;border-top:none;"></div>
<span class="t" style="left:568px;top:877.07px;font-size:13.5px;line-height:13.5px;color:#555;-webkit-text-stroke:0.22px;transform:scaleX(0.9237);">Case Styling</span>
<div style="left:723px;top:872px;width:182px;height:25px;background:#e8e8e8;border-radius:0 0 6px 6px;border:1px solid #c4c4c4;border-top:none;"></div>
<span class="t" style="left:753px;top:877.07px;font-size:13.5px;line-height:13.5px;color:#555;-webkit-text-stroke:0.22px;transform:scaleX(0.9303);">Crank</span>
<div style="left:908px;top:872px;width:182px;height:25px;background:#e8e8e8;border-radius:0 0 6px 6px;border:1px solid #c4c4c4;border-top:none;"></div>
<span class="t" style="left:938px;top:877.07px;font-size:13.5px;line-height:13.5px;color:#555;-webkit-text-stroke:0.22px;transform:scaleX(0.9252);">Gear Train</span>
<div style="left:1093px;top:872px;width:183px;height:26px;background:#fff;border-radius:0 0 3px 3px;border-bottom:2px solid #1d4796;"></div>
<span class="t" style="left:1123px;top:877.07px;font-size:13.5px;line-height:13.5px;color:#333;-webkit-text-stroke:0.22px;transform:scaleX(0.9413);">Spool</span>
<div style="left:1569px;top:401px;width:30px;height:123px;background:#fff;border:1px solid #ddd;border-right:none;"></div>
<div style="left:1569px;top:431px;width:30px;height:1px;background:#e2e2e2;"></div>
<div style="left:1569px;top:461px;width:30px;height:1px;background:#e2e2e2;"></div>
<div style="left:1569px;top:492px;width:30px;height:1px;background:#e2e2e2;"></div>
<svg style="left:4.1px;top:7.9px;" width="19.2" height="21.12" viewBox="0 0 20 22"><path d="M12.52,2.06 L10.00,0.60 L0.99,5.80 L0.99,11.60 L4.54,11.60 L4.54,7.85 L10.00,4.70 L11.83,5.58Z" fill="#47a043"/><path d="M13.78,2.78 L19.01,5.80 L19.01,16.20 L16.12,17.86 L15.46,14.35 L15.46,7.85 L12.73,6.28Z" fill="#54b04a"/><path d="M0.99,12.70 L0.99,16.20 L10.00,21.40 L14.95,18.54 L14.36,15.38 L10.00,17.30 L4.54,14.15 L4.54,12.70Z" fill="#4fa943"/><path d="M11.60,7.80 L13.55,8.95 L13.55,13.05 L10.00,15.10 L6.45,13.05 L6.45,8.95 L9.60,7.10" fill="none" stroke="#4c4c4c" stroke-width="1.35"/></svg>
<svg style="left:1447.8px;top:8.4px;" width="19.6" height="21.560000000000002" viewBox="0 0 20 22"><path d="M12.52,2.06 L10.00,0.60 L0.99,5.80 L0.99,11.60 L4.54,11.60 L4.54,7.85 L10.00,4.70 L11.83,5.58Z" fill="#47a043"/><path d="M13.78,2.78 L19.01,5.80 L19.01,16.20 L16.12,17.86 L15.46,14.35 L15.46,7.85 L12.73,6.28Z" fill="#54b04a"/><path d="M0.99,12.70 L0.99,16.20 L10.00,21.40 L14.95,18.54 L14.36,15.38 L10.00,17.30 L4.54,14.15 L4.54,12.70Z" fill="#4fa943"/><path d="M11.60,7.80 L13.55,8.95 L13.55,13.05 L10.00,15.10 L6.45,13.05 L6.45,8.95 L9.60,7.10" fill="none" stroke="#4c4c4c" stroke-width="1.35"/></svg>
<svg style="left:292px;top:11px;" width="16" height="16" viewBox="0 0 16 16"><g fill="none" stroke="#3c3c3c" stroke-width="1.7" stroke-linecap="round"><path d="M7.2 9.3 a3 3 0 0 1 0-4.2 l2.3-2.3 a3 3 0 0 1 4.2 4.2 l-1.4 1.4"/><path d="M9 6.9 a3 3 0 0 1 0 4.2 l-2.3 2.3 a3 3 0 0 1 -4.2-4.2 l1.4-1.4"/></g></svg>
<svg style="left:314px;top:12px;" width="18" height="14" viewBox="0 0 18 14"><path d="M1.5 2.5 h5 l1.6 1.8 h8.4 v8.2 h-15 z" fill="none" stroke="#9c9c9c" stroke-width="1.3" stroke-linejoin="round"/></svg>
<svg style="left:1225px;top:10px;" width="20" height="18" viewBox="0 0 20 18"><g fill="none" stroke="#3c3c3c" stroke-width="1.5" stroke-linecap="round" stroke-linejoin="round"><path d="M5.5 1.5 c-2.2 0-2.6 1-2.6 2.6 v2.4 c0 1.2-.5 2-1.8 2.4 c1.3.4 1.8 1.2 1.8 2.4 v2.4 c0 1.6.4 2.6 2.6 2.6"/><path d="M14.5 1.5 c2.2 0 2.6 1 2.6 2.6 v2.4 c0 1.2.5 2 1.8 2.4 c-1.3.4-1.8 1.2-1.8 2.4 v2.4 c0 1.6-.4 2.6-2.6 2.6"/><path d="M6.6 8.8 l2.4 2.8 l4.4-5.6"/></g></svg>
<svg style="left:1256px;top:10px;" width="17" height="18" viewBox="0 0 17 18"><g fill="none" stroke="#3c3c3c" stroke-width="1.3"><rect x="1" y="1.2" width="14.6" height="15.6" rx="1.5"/><path d="M3.6 5 l1.2 1.2 l2-2.4 M3.6 9 l1.2 1.2 l2-2.4 M3.6 13 l1.2 1.2 l2-2.4" stroke-width="1.1"/><path d="M8.6 5.4 h4.8 M8.6 9.4 h4.8 M8.6 13.4 h4.8"/></g></svg>
<svg style="left:1284px;top:10px;" width="19" height="18" viewBox="0 0 19 18"><g fill="none" stroke="#3c3c3c" stroke-width="1.4"><rect x="1.2" y="1.6" width="6.2" height="6.2"/><rect x="1.2" y="10.6" width="6.2" height="6.2"/><rect x="10.2" y="10.6" width="6.2" height="6.2"/><path d="M13.4 1 v7.4 M9.6 4.7 h7.6" stroke-width="1.6"/></g></svg>
<svg style="left:1313px;top:10px;" width="19" height="18" viewBox="0 0 19 18"><path d="M9.2 1 c4.6 0 7.6 3 7.6 6.6 c0 2.2-.9 3.6-2.2 4.9 v4.5 h-7.4 v-2.6 h-2 c-.9 0-1.4-.5-1.4-1.4 v-2 l-1.6-.7 c-.5-.3-.4-.8-.1-1.2 l1.7-2.4 c.2-3.4 2.4-5.7 5.4-5.7z" fill="#3c3c3c"/><circle cx="8" cy="6.6" r="2.2" fill="none" stroke="#f9f9fa" stroke-width="1.1"/><circle cx="12.2" cy="9.2" r="1.7" fill="none" stroke="#f9f9fa" stroke-width="1"/></svg>
<svg style="left:1404px;top:11px;" width="18" height="18" viewBox="0 0 18 18"><circle cx="9" cy="9" r="8.2" fill="#4a4a4a"/><path d="M6.2 7 c0-1.8 1.2-2.9 2.9-2.9 s2.9 1 2.9 2.6 c0 2-2.4 2.2-2.4 4" fill="none" stroke="#fff" stroke-width="2"/><circle cx="9.5" cy="13.6" r="1.25" fill="#fff"/></svg>
<svg style="left:1428px;top:16px;" width="8" height="6" viewBox="0 0 8 6"><path d="M0.5 1 h7 l-3.5 3.8z" fill="#333"/></svg>
<svg style="left:1587px;top:16px;" width="9" height="6" viewBox="0 0 9 6"><path d="M0.5 1 h7.4 l-3.7 3.8z" fill="#333"/></svg>
<svg style="left:8px;top:43px;" width="22" height="21" viewBox="0 0 22 21"><g fill="none" stroke="#1b5faa" stroke-width="1.9" stroke-linecap="round"><circle cx="4.6" cy="5.6" r="3.1" stroke-width="1.7"/><path d="M4.6 8.8 V17"/><path d="M4.6 14 c0-2.6 4.6-1.6 5.2-4"/><path d="M11.4 3.6 H19.4 M13.4 9.2 H19.4 M14.4 13.6 H19.4 M11.4 17.6 H19.4"/></g><circle cx="4.6" cy="17.3" r="1.7" fill="#1b5faa"/><circle cx="10" cy="9.6" r="1.6" fill="#1b5faa"/></svg>
<svg style="left:8px;top:75px;" width="22" height="21" viewBox="0 0 22 21"><path d="M6.4 1.6 V19.4" stroke="#333" stroke-width="1.6" stroke-dasharray="2 1.6" fill="none"/><circle cx="6.4" cy="10.3" r="3" fill="#2b2b2b"/><path d="M15 10.4 v8 M11 14.4 h8" stroke="#1b5faa" stroke-width="2.2" fill="none"/></svg>
<svg style="left:8px;top:106px;" width="22" height="20" viewBox="0 0 22 20"><ellipse cx="10.4" cy="8.6" rx="9.2" ry="6.8" fill="#2b2b2b"/><path d="M5.6 12.4 L2.4 18.4 L10 14.4z" fill="#2b2b2b"/></svg>
<svg style="left:8px;top:138px;" width="22" height="22" viewBox="0 0 22 22"><g fill="none" stroke="#2b2b2b" stroke-width="1.5" stroke-linejoin="round"><path d="M2 10.2 l6-2.8 l5.6 2.6 v6.4 l-5.8 3 l-5.8-2.8z"/><path d="M2 10.2 l5.8 2.8 l5.8-3 M7.8 13 v6.4"/><path d="M13.8 13.2 c2.4-.4 2.8-2 3-4"/></g><circle cx="16.8" cy="5.6" r="3.6" fill="#2b2b2b"/><circle cx="16.8" cy="5.6" r="1.2" fill="#f9f9fa"/></svg>
<svg style="left:8px;top:171px;" width="22" height="21" viewBox="0 0 22 21"><g fill="none" stroke="#2b2b2b" stroke-linecap="round"><circle cx="11.8" cy="12" r="6.6" stroke-width="2"/><path d="M11.8 12 l3-3.4" stroke-width="1.6"/><path d="M9.4 2.4 h4.8 M11.8 2.6 v2.6" stroke-width="1.8"/><path d="M2.2 9.4 h3 M1.4 12.4 h3.4 M2.6 15.4 h3" stroke-width="1.2"/></g></svg>
<svg style="left:8px;top:876px;" width="22" height="18" viewBox="0 0 22 18"><rect x="1.6" y="1.6" width="15.8" height="8.6" fill="#2b2b2b"/><circle cx="11.4" cy="9.4" r="5.2" fill="#f9f9fa"/><circle cx="11.4" cy="9.4" r="3.9" fill="#f9f9fa" stroke="#2b2b2b" stroke-width="1.8"/><path d="M14.4 12.4 l3.8 3.8" stroke="#2b2b2b" stroke-width="2.2" stroke-linecap="round"/></svg>
<svg style="left:330px;top:44px;" width="18" height="18" viewBox="0 0 18 18"><g fill="none" stroke="#222" stroke-width="1.700" stroke-linecap="round" stroke-linejoin="round"><path d="M4.300 3.700 V11.600 q0 2.400 2.400 2.400 h1.200"/><path d="M6.300 12 l2.100 2.100 l-2.100 2"/><path d="M14.200 14.700 V6.600 q0 -2.400 -2.400 -2.400 h-1.200"/><path d="M11.900 6.200 l-2.100 -2.100 l2.100 -2"/></g><circle cx="4.300" cy="3.700" r="1.400" fill="#222"/><circle cx="14.200" cy="14.700" r="1.400" fill="#222"/></svg>
<svg style="left:366px;top:47px;" width="12" height="12" viewBox="0 0 12 12"><path d="M1.6 1.6 L10.4 10.4 M10.4 1.6 L1.6 10.4" stroke="#666" stroke-width="1.5" fill="none"/></svg>
<svg style="left:331px;top:86px;" width="8" height="6" viewBox="0 0 8 6"><path d="M0.8 1 h6.4 l-3.2 3.6z" fill="#333"/></svg>
<svg style="left:352px;top:79px;" width="20" height="20" viewBox="0 0 20 20"><circle cx="8.4" cy="8.600" r="5.500" fill="none" stroke="#3a3a3a" stroke-width="1.700"/><path d="M12.600 12.800 l5.400 5.200" stroke="#3a3a3a" stroke-width="2.200" stroke-linecap="round"/></svg>
<svg style="left:169px;top:173px;" width="11" height="8" viewBox="0 0 11 8"><path d="M1.4 1.6 l4 4 l4-4" fill="none" stroke="#555" stroke-width="1.7"/></svg>
<svg style="left:236px;top:283px;" width="13" height="18" viewBox="0 0 13 18"><path d="M3.2 1.2 c.9-.3 1.5.1 1.5 1 v5 l.9-.1 c.5-.9 1.4-.8 1.8-.1 c.7-.6 1.5-.3 1.8.4 c.8-.3 1.5.1 1.5 1 v3.4 c0 1.4-.5 2.6-1.1 3.6 v1.3 h-5.6 v-1.2 c-1.2-1.3-2.4-3-3.4-4.8 c-.4-.8.4-1.5 1.2-.9 l.9 1 v-8.400z" fill="#fff" stroke="#111" stroke-width="0.9" stroke-linejoin="round"/><path d="M5.8 8 v3 M7.6 8 v3 M9.4 8.4 v2.6" stroke="#111" stroke-width="0.6"/></svg>
<svg style="left:83px;top:772px;" width="16" height="20" viewBox="0 0 16 20"><circle cx="7.4" cy="8" r="5" fill="#fff" stroke="#1b5faa" stroke-width="1.9"/><path d="M7.4 13 v5" stroke="#1b5faa" stroke-width="1.9"/></svg>
<svg style="left:198px;top:771px;" width="14" height="22" viewBox="0 0 14 22"><path d="M7 1.4 v19" stroke="#1b5faa" stroke-width="1.8"/><circle cx="7" cy="10.4" r="4.2" fill="#1b5faa"/></svg>
<svg style="left:287px;top:771px;" width="12" height="22" viewBox="0 0 12 22"><path d="M6 1.4 v5 M6 14.400 v5.600" stroke="#1b5faa" stroke-width="1.8"/><circle cx="6" cy="10.4" r="1.7" fill="#1b5faa"/></svg>
<svg style="left:82px;top:801px;" width="18" height="22" viewBox="0 0 18 22"><path d="M8.6 3.400 L14.400 17 H2.800z" fill="#fff" stroke="#1b5faa" stroke-width="1.8" stroke-linejoin="round"/><path d="M8.600 1 v3 M8.600 17 v4" stroke="#1b5faa" stroke-width="1.8"/></svg>
<svg style="left:231px;top:801px;" width="18" height="22" viewBox="0 0 18 22"><path d="M8.6 3 L15.200 17.6 H2z" fill="#1b5faa" stroke="#1b5faa" stroke-width="1.2" stroke-linejoin="round"/><path d="M8.600 0.600 v3 M8.600 17 v4" stroke="#1b5faa" stroke-width="1.8"/></svg>
<svg style="left:82px;top:831px;" width="18" height="22" viewBox="0 0 18 22"><path d="M7.6 3.400 L14.200 17.600 H1z" fill="#1b5faa" stroke="#1b5faa" stroke-width="1.2" stroke-linejoin="round"/><path d="M7.600 1 v3 M7.600 17 v4" stroke="#1b5faa" stroke-width="1.800"/><circle cx="14.600" cy="4" r="2.500" fill="#1b5faa" stroke="#fff" stroke-width="0.800"/></svg>
<svg style="left:238px;top:830px;" width="20" height="22" viewBox="0 0 20 22"><path d="M14.800 5.400 a7 7 0 1 0 2.200 6.600" fill="none" stroke="#2b2b2b" stroke-width="1.900"/><path d="M12 2.400 h5.200 v5.200" fill="none" stroke="#2b2b2b" stroke-width="1.800"/><path d="M10 5.400 v11.200" stroke="#2b2b2b" stroke-width="1.400"/><circle cx="10" cy="11" r="2.600" fill="#2b2b2b"/></svg>
<svg style="left:364px;top:878px;" width="14" height="14" viewBox="0 0 14 14"><circle cx="7" cy="7" r="5.800" fill="#a9a9a9"/><path d="M5.100 5.700 c0-1.200.800-1.900 1.900-1.900 s1.900.700 1.900 1.700 c0 1.300-1.500 1.400-1.500 2.600" fill="none" stroke="#ececec" stroke-width="1.300"/><circle cx="7.300" cy="10.100" r="0.850" fill="#ececec"/></svg>
<svg style="left:537.6px;top:75.2px;" width="18" height="19" viewBox="0 0 18 19"><g fill="none" stroke="#222" stroke-linecap="round"><circle cx="9" cy="11" r="6.500" stroke-width="1.800"/><path d="M7.600 9.800 l3.600 4" stroke-width="1.600"/><path d="M6.900 2.100 h4.200 M9 2.300 v2.400" stroke-width="1.700"/><path d="M14 5 l1 -1.100" stroke-width="1.600"/></g></svg>
<svg style="left:394px;top:106px;" width="18" height="18" viewBox="0 0 18 18"><path d="M2 2.600 H16 L9.600 10.400 V13.400 L8.300 15.400 V10.400 Z" fill="none" stroke="#444" stroke-width="1.400" stroke-linejoin="round"/></svg>
<svg style="left:558px;top:132px;" width="8" height="6" viewBox="0 0 8 6"><path d="M0.600 4.600 h6.800 l-3.400-3.600z" fill="#a3a3a3"/></svg>
<svg style="left:558px;top:580px;" width="8" height="6" viewBox="0 0 8 6"><path d="M0.600 1 h6.800 l-3.400 3.600z" fill="#333"/></svg>
<svg style="left:389.2px;top:135.6px;" width="12" height="8" viewBox="0 0 12 8"><path d="M1.300 1.400 l4.500 4.500 l4.500-4.500" fill="none" stroke="#555" stroke-width="1.600"/></svg>
<svg style="left:389.2px;top:599px;" width="12" height="8" viewBox="0 0 12 8"><path d="M1.300 1.400 l4.500 4.500 l4.500-4.500" fill="none" stroke="#555" stroke-width="1.600"/></svg>
<svg style="left:391px;top:835px;" width="8" height="12" viewBox="0 0 8 12"><path d="M1.400 1.300 l4.500 4.500 l-4.500 4.500" fill="none" stroke="#555" stroke-width="1.600"/></svg>
<div style="left:394px;top:151px;width:1px;height:95px;background:#c8c8c8;"></div>
<div style="left:390px;top:246px;width:9px;height:1px;background:#c8c8c8;"></div>
<svg style="left:410px;top:158px;" width="11" height="11" viewBox="0 0 11 11"><circle cx="5.300" cy="5.300" r="2.900" fill="none" stroke="#b3b3b3" stroke-width="1.100"/><circle cx="5.300" cy="5.300" r="1" fill="#b3b3b3"/></svg>
<svg style="left:408.3px;top:178.4px;" width="16" height="16" viewBox="0 0 16 16"><path d="M1.200 1.600 L13.600 2.800 V14.400 L1.200 11.600 Z" fill="#ececec" stroke="#b3b3b3" stroke-width="1.100" stroke-linejoin="round"/><path d="M6.400 2.200 V7.400 L13.600 8.400" fill="none" stroke="#b3b3b3" stroke-width="1"/></svg>
<svg style="left:408.3px;top:202.2px;" width="16" height="16" viewBox="0 0 16 16"><path d="M1.200 1.600 L13.600 2.800 V14.400 L1.200 11.600 Z" fill="#ececec" stroke="#b3b3b3" stroke-width="1.100" stroke-linejoin="round"/><path d="M6.400 2.200 V7.400 L13.600 8.400" fill="none" stroke="#b3b3b3" stroke-width="1"/></svg>
<svg style="left:408.3px;top:226px;" width="16" height="16" viewBox="0 0 16 16"><path d="M1.200 1.600 L13.600 2.800 V14.400 L1.200 11.600 Z" fill="#ececec" stroke="#b3b3b3" stroke-width="1.100" stroke-linejoin="round"/><path d="M6.400 2.200 V7.400 L13.600 8.400" fill="none" stroke="#b3b3b3" stroke-width="1"/></svg>
<svg style="left:391.3px;top:321.4px;" width="16" height="16" viewBox="0 0 16 16"><path d="M1.200 1.600 L13.600 2.800 V14.400 L1.200 11.600 Z" fill="#ececec" stroke="#b3b3b3" stroke-width="1.100" stroke-linejoin="round"/><path d="M6.400 2.200 V7.400 L13.600 8.400" fill="none" stroke="#b3b3b3" stroke-width="1"/></svg>
<svg style="left:391.6px;top:250.4px;" width="16" height="15" viewBox="0 0 16 15"><path d="M1.600 10.400 L9.800 2 L12.200 4.200 L4.200 12 L1.200 12.800 Z M3 9.600 L5.200 11.400" fill="none" stroke="#b0b0b0" stroke-width="1" stroke-linejoin="round"/><path d="M0.400 13.800 H14.400" stroke="#b4b8e0" stroke-width="1.100"/></svg>
<svg style="left:391.6px;top:298.06px;" width="16" height="15" viewBox="0 0 16 15"><path d="M1.600 10.400 L9.800 2 L12.200 4.200 L4.200 12 L1.200 12.800 Z M3 9.600 L5.200 11.400" fill="none" stroke="#b0b0b0" stroke-width="1" stroke-linejoin="round"/><path d="M0.400 13.800 H14.400" stroke="#b4b8e0" stroke-width="1.100"/></svg>
<svg style="left:391.6px;top:345.72px;" width="16" height="15" viewBox="0 0 16 15"><path d="M1.600 10.400 L9.800 2 L12.200 4.200 L4.200 12 L1.200 12.800 Z M3 9.600 L5.200 11.400" fill="none" stroke="#b0b0b0" stroke-width="1" stroke-linejoin="round"/><path d="M0.400 13.800 H14.400" stroke="#b4b8e0" stroke-width="1.100"/></svg>
<svg style="left:391.6px;top:393.38px;" width="16" height="15" viewBox="0 0 16 15"><path d="M1.600 10.400 L9.800 2 L12.200 4.200 L4.200 12 L1.200 12.800 Z M3 9.600 L5.200 11.400" fill="none" stroke="#b0b0b0" stroke-width="1" stroke-linejoin="round"/><path d="M0.400 13.800 H14.400" stroke="#b4b8e0" stroke-width="1.100"/></svg>
<svg style="left:391.6px;top:464.87px;" width="16" height="15" viewBox="0 0 16 15"><path d="M1.600 10.400 L9.800 2 L12.200 4.200 L4.200 12 L1.200 12.800 Z M3 9.600 L5.200 11.400" fill="none" stroke="#b0b0b0" stroke-width="1" stroke-linejoin="round"/><path d="M0.400 13.800 H14.400" stroke="#b4b8e0" stroke-width="1.100"/></svg>
<svg style="left:391.6px;top:512.53px;" width="16" height="15" viewBox="0 0 16 15"><path d="M1.600 10.400 L9.800 2 L12.200 4.200 L4.200 12 L1.200 12.800 Z M3 9.600 L5.200 11.400" fill="none" stroke="#b0b0b0" stroke-width="1" stroke-linejoin="round"/><path d="M0.400 13.800 H14.400" stroke="#b4b8e0" stroke-width="1.100"/></svg>
<svg style="left:391.6px;top:536.36px;" width="16" height="15" viewBox="0 0 16 15"><path d="M1.600 10.400 L9.800 2 L12.200 4.200 L4.200 12 L1.200 12.800 Z M3 9.600 L5.200 11.400" fill="none" stroke="#b0b0b0" stroke-width="1" stroke-linejoin="round"/><path d="M0.400 13.800 H14.400" stroke="#b4b8e0" stroke-width="1.100"/></svg>
<div style="left:387px;top:583px;width:168px;height:7px;overflow:hidden;">
<svg style="left:4.600px;top:1.400px;" width="16" height="15" viewBox="0 0 16 15"><path d="M1.600 10.400 L9.800 2 L12.200 4.200 L4.200 12 L1.200 12.800 Z" fill="none" stroke="#b0b0b0" stroke-width="1"/></svg>
</div>
<svg style="left:390.6px;top:274.6px;" width="16" height="16" viewBox="0 0 16 16"><path d="M7.600 1.200 a6.600 6.600 0 1 0 5.200 10.600 l-3.200-2 a2.800 2.800 0 1 1 0-3.600 l3.200-2 a6.600 6.600 0 0 0 -5.200-3z" fill="#8c8c8c" stroke="#3a3a3a" stroke-width="1.100" stroke-linejoin="round"/><circle cx="7.600" cy="7.800" r="1.500" fill="#fff" stroke="#3a3a3a" stroke-width="0.900"/><path d="M11.400 7.800 h3.200" stroke="#3a3a3a" stroke-width="1" stroke-dasharray="1.400 0.800"/></svg>
<svg style="left:391px;top:369.6px;" width="16" height="16" viewBox="0 0 16 16"><rect x="1" y="1" width="13.600" height="13.400" rx="2.200" fill="#fff" stroke="#3a3a3a" stroke-width="1.100"/><path d="M3.800 1.400 V14 M1.200 12 L3.800 11" stroke="#3a3a3a" stroke-width="0.900" fill="none"/><rect x="5.800" y="5.400" width="8.200" height="8.400" fill="#8c8c8c" stroke="#3a3a3a" stroke-width="0.900"/><path d="M5.800 5.400 L7.600 4 H14" stroke="#3a3a3a" stroke-width="0.900" fill="none"/></svg>
<svg style="left:391px;top:488.8px;" width="16" height="16" viewBox="0 0 16 16"><rect x="1" y="1" width="13.600" height="13.400" rx="2.200" fill="#fff" stroke="#3a3a3a" stroke-width="1.100"/><path d="M3.800 1.400 V14 M1.200 12 L3.800 11" stroke="#3a3a3a" stroke-width="0.900" fill="none"/><rect x="5.800" y="5.400" width="8.200" height="8.400" fill="#8c8c8c" stroke="#3a3a3a" stroke-width="0.900"/><path d="M5.800 5.400 L7.600 4 H14" stroke="#3a3a3a" stroke-width="0.900" fill="none"/></svg>
<svg style="left:391px;top:416px;" width="17" height="17" viewBox="0 0 17 17"><path d="M1.400 13.600 c0-5 2.400-7.200 6-7.200 c2.200 0 3-.800 3.300-2.200 l4.400 1.400 c-.800 3.400-3.200 4.600-6.400 4.600 c-1.800 0-2.400 .800-2.400 2.800 a2.200 1.200 0 0 1 -4.400 0z" fill="#8c8c8c" stroke="#3a3a3a" stroke-width="1.100" stroke-linejoin="round"/><ellipse cx="13" cy="4" rx="2.500" ry="2.100" transform="rotate(20 13 4)" fill="#fff" stroke="#3a3a3a" stroke-width="1"/></svg>
<svg style="left:390.6px;top:440px;" width="17" height="17" viewBox="0 0 17 17"><path d="M3.600 3.600 L9.600 1 L14.800 3.200 L9.200 5.600 Z" fill="#8c8c8c" stroke="#3a3a3a" stroke-width="0.900" stroke-linejoin="round"/><path d="M1.200 9 c0-1.800 1.200-2.600 3-2.600 h8.400 c1.800 0 3 .800 3 2.600 v4.800 H4.200 c-1.800 0-3-1-3-2.400z" fill="#fff" stroke="#3a3a3a" stroke-width="1.100" stroke-linejoin="round"/><path d="M1.600 9.600 c1 1.400 2 1.800 3.600 1.800 H15.400 M4.800 11.400 V13.600" fill="none" stroke="#3a3a3a" stroke-width="0.900"/></svg>
<svg style="left:391px;top:560px;" width="16" height="16" viewBox="0 0 16 16"><rect x="1" y="1.400" width="13.600" height="12.800" rx="2.200" fill="#fff" stroke="#3a3a3a" stroke-width="1.100"/><path d="M3.800 1.800 V13.800" stroke="#3a3a3a" stroke-width="0.900"/><path d="M3.800 9.600 c3.600-1.800 6.400.800 10.800-2.400" fill="none" stroke="#3a3a3a" stroke-width="1"/></svg>
<svg style="left:408px;top:619.0px;" width="16" height="15" viewBox="0 0 16 15"><path d="M1.400 8.800 L5.800 7 V3 c0-1.200 .800-2 2-2 h4 c1.400 0 2.200 .800 2.200 2.200 V11.600 c0 1.200-.800 2-2 2 H3.600 c-1.400 0-2.200-.800-2.200-2.200z" fill="#fff" stroke="#555" stroke-width="1.100" stroke-linejoin="round"/><path d="M5.800 7 L8.400 8.200 V3.400 M8.400 8.200 L4.400 10.200 L1.600 9" fill="none" stroke="#555" stroke-width="0.900" stroke-linejoin="round"/></svg>
<svg style="left:408px;top:642.8px;" width="16" height="15" viewBox="0 0 16 15"><path d="M1.400 8.800 L5.800 7 V3 c0-1.200 .800-2 2-2 h4 c1.400 0 2.200 .800 2.200 2.200 V11.600 c0 1.200-.800 2-2 2 H3.600 c-1.400 0-2.200-.800-2.200-2.200z" fill="#fff" stroke="#555" stroke-width="1.100" stroke-linejoin="round"/><path d="M5.800 7 L8.400 8.200 V3.400 M8.400 8.200 L4.400 10.200 L1.600 9" fill="none" stroke="#555" stroke-width="0.900" stroke-linejoin="round"/></svg>
<svg style="left:408px;top:666.6px;" width="16" height="15" viewBox="0 0 16 15"><path d="M1.400 8.800 L5.800 7 V3 c0-1.200 .800-2 2-2 h4 c1.400 0 2.200 .800 2.200 2.200 V11.600 c0 1.200-.800 2-2 2 H3.600 c-1.400 0-2.200-.800-2.200-2.200z" fill="#fff" stroke="#555" stroke-width="1.100" stroke-linejoin="round"/><path d="M5.800 7 L8.400 8.200 V3.400 M8.400 8.200 L4.400 10.200 L1.600 9" fill="none" stroke="#555" stroke-width="0.900" stroke-linejoin="round"/></svg>
<svg style="left:408px;top:690.4px;" width="16" height="15" viewBox="0 0 16 15"><path d="M1.400 8.800 L5.800 7 V3 c0-1.200 .800-2 2-2 h4 c1.400 0 2.200 .800 2.200 2.200 V11.600 c0 1.200-.800 2-2 2 H3.600 c-1.400 0-2.200-.800-2.200-2.200z" fill="#fff" stroke="#555" stroke-width="1.100" stroke-linejoin="round"/><path d="M5.800 7 L8.400 8.200 V3.400 M8.400 8.200 L4.400 10.200 L1.600 9" fill="none" stroke="#555" stroke-width="0.900" stroke-linejoin="round"/></svg>
<svg style="left:408px;top:714.2px;" width="16" height="15" viewBox="0 0 16 15"><path d="M1.400 8.800 L5.800 7 V3 c0-1.200 .800-2 2-2 h4 c1.400 0 2.200 .800 2.200 2.200 V11.600 c0 1.200-.800 2-2 2 H3.600 c-1.400 0-2.200-.800-2.200-2.200z" fill="#fff" stroke="#555" stroke-width="1.100" stroke-linejoin="round"/><path d="M5.800 7 L8.400 8.200 V3.400 M8.400 8.200 L4.400 10.200 L1.600 9" fill="none" stroke="#555" stroke-width="0.900" stroke-linejoin="round"/></svg>
<svg style="left:408px;top:738.0px;" width="16" height="15" viewBox="0 0 16 15"><path d="M1.400 8.800 L5.800 7 V3 c0-1.200 .800-2 2-2 h4 c1.400 0 2.200 .800 2.200 2.200 V11.600 c0 1.200-.800 2-2 2 H3.600 c-1.400 0-2.200-.800-2.200-2.200z" fill="#fff" stroke="#555" stroke-width="1.100" stroke-linejoin="round"/><path d="M5.800 7 L8.400 8.200 V3.400 M8.400 8.200 L4.400 10.200 L1.600 9" fill="none" stroke="#555" stroke-width="0.900" stroke-linejoin="round"/></svg>
<svg style="left:408px;top:761.8px;" width="16" height="15" viewBox="0 0 16 15"><path d="M1.400 8.800 L5.800 7 V3 c0-1.200 .800-2 2-2 h4 c1.400 0 2.200 .800 2.200 2.200 V11.600 c0 1.200-.800 2-2 2 H3.600 c-1.400 0-2.200-.800-2.200-2.200z" fill="#fff" stroke="#555" stroke-width="1.100" stroke-linejoin="round"/><path d="M5.800 7 L8.400 8.200 V3.400 M8.400 8.200 L4.400 10.200 L1.600 9" fill="none" stroke="#555" stroke-width="0.900" stroke-linejoin="round"/></svg>
<svg style="left:408px;top:785.6px;" width="16" height="15" viewBox="0 0 16 15"><path d="M1.400 8.800 L5.800 7 V3 c0-1.200 .800-2 2-2 h4 c1.400 0 2.200 .800 2.200 2.200 V11.600 c0 1.200-.800 2-2 2 H3.600 c-1.400 0-2.200-.800-2.200-2.200z" fill="#fff" stroke="#555" stroke-width="1.100" stroke-linejoin="round"/><path d="M5.800 7 L8.400 8.200 V3.400 M8.400 8.200 L4.400 10.200 L1.600 9" fill="none" stroke="#555" stroke-width="0.900" stroke-linejoin="round"/></svg>
<svg style="left:408px;top:809.4px;" width="16" height="15" viewBox="0 0 16 15"><path d="M1.400 8.800 L5.800 7 V3 c0-1.200 .800-2 2-2 h4 c1.400 0 2.200 .800 2.200 2.200 V11.600 c0 1.200-.800 2-2 2 H3.600 c-1.400 0-2.200-.800-2.200-2.200z" fill="#fff" stroke="#555" stroke-width="1.100" stroke-linejoin="round"/><path d="M5.800 7 L8.400 8.200 V3.400 M8.400 8.200 L4.400 10.200 L1.600 9" fill="none" stroke="#555" stroke-width="0.900" stroke-linejoin="round"/></svg>
<svg style="left:579px;top:454px;" width="20" height="18" viewBox="0 0 20 18"><g stroke="#333" fill="none"><path d="M3.400 3.400 V16" stroke-width="1.600"/><path d="M1.200 1.400 L3.400 3.800 L5.600 1.400" stroke-width="1.300"/><path d="M6.400 4.600 H18 M6.400 8.400 H18 M6.400 12.200 H18 M6.400 16 H18" stroke-width="1.500"/></g></svg>
<svg style="left:393px;top:877px;" width="14" height="14" viewBox="0 0 14 14"><path d="M7 1 V13 M1 7 H13" stroke="#9a9a9a" stroke-width="2.200" fill="none"/></svg>
<svg style="left:423px;top:873px;" width="20" height="20" viewBox="0 0 20 20"><path d="M10 2 L1.600 10.200 H4 V18 H8.400 V12.600 H11.600 V18 H16 V10.200 H18.400 L15.200 7.100 V3.200 H13 V4.900 Z" fill="#555"/></svg>
<svg style="left:464px;top:876px;" width="20" height="16" viewBox="0 0 20 16"><path d="M1.400 2 h5.400 l1.600 1.800 h9.400 v10 h-16.400z" fill="#fff" stroke="#555" stroke-width="1.300" stroke-linejoin="round"/></svg>
<svg style="left:546.5px;top:875px;" width="18" height="18" viewBox="0 0 18 18"><g fill="#fff" stroke="#3a3a3a" stroke-width="1.300" stroke-linejoin="round"><path d="M1.900 4.800 Q1.900 3.700 3 3.700 L6.600 3.700 L9.600 5.400 V16.500 H5.400 Q1.900 16.500 1.900 13.200 Z"/><path d="M9.600 0.800 H14.400 L17.100 4.200 V16.500 H9.600 Z"/><path d="M2.200 4.200 L4.800 6.400 V16.200 M4.800 6.400 H9.400 M10 1.200 L11.700 3.200 V16.200" fill="none" stroke="#9a9a9a" stroke-width="0.700"/></g></svg>
<svg style="left:731.5px;top:875px;" width="18" height="18" viewBox="0 0 18 18"><g fill="#fff" stroke="#3a3a3a" stroke-width="1.300" stroke-linejoin="round"><path d="M1.900 4.800 Q1.900 3.700 3 3.700 L6.600 3.700 L9.600 5.400 V16.500 H5.400 Q1.900 16.500 1.900 13.200 Z"/><path d="M9.600 0.800 H14.400 L17.100 4.200 V16.500 H9.600 Z"/><path d="M2.200 4.200 L4.800 6.400 V16.200 M4.800 6.400 H9.400 M10 1.200 L11.700 3.200 V16.200" fill="none" stroke="#9a9a9a" stroke-width="0.700"/></g></svg>
<svg style="left:916.5px;top:875px;" width="18" height="18" viewBox="0 0 18 18"><g fill="#fff" stroke="#3a3a3a" stroke-width="1.300" stroke-linejoin="round"><path d="M1.900 4.800 Q1.900 3.700 3 3.700 L6.600 3.700 L9.600 5.400 V16.500 H5.400 Q1.900 16.500 1.900 13.200 Z"/><path d="M9.600 0.800 H14.400 L17.100 4.200 V16.500 H9.600 Z"/><path d="M2.200 4.200 L4.800 6.400 V16.200 M4.800 6.400 H9.400 M10 1.200 L11.700 3.200 V16.200" fill="none" stroke="#9a9a9a" stroke-width="0.700"/></g></svg>
<svg style="left:1101.5px;top:875px;" width="18" height="18" viewBox="0 0 18 18"><g fill="#fff" stroke="#3a3a3a" stroke-width="1.300" stroke-linejoin="round"><path d="M1.900 4.800 Q1.900 3.700 3 3.700 L6.600 3.700 L9.600 5.400 V16.500 H5.400 Q1.900 16.500 1.900 13.200 Z"/><path d="M9.600 0.800 H14.400 L17.100 4.200 V16.500 H9.600 Z"/><path d="M2.200 4.200 L4.800 6.400 V16.200 M4.800 6.400 H9.400 M10 1.200 L11.700 3.200 V16.200" fill="none" stroke="#9a9a9a" stroke-width="0.700"/></g></svg>
<svg style="left:1506px;top:850.5px;" width="19" height="18" viewBox="0 0 19 18"><g fill="none" stroke="#333" stroke-width="1.300" stroke-linejoin="round"><ellipse cx="11.600" cy="5.400" rx="4.800" ry="3"/><ellipse cx="11.600" cy="5.400" rx="1.900" ry="1.100"/><path d="M6.800 5.400 V9 H2.400 V13.200 H13 c2.400 0 3.400-1.400 3.400-3.400 V5.400"/><path d="M4.400 13.200 v-1.600 M6.400 13.200 v-1.600 M8.400 13.200 v-1.600 M10.400 13.200 v-1.600 M12.400 13.200 v-1.600" stroke-width="0.900"/></g></svg>
<svg style="left:1538px;top:850.2px;" width="21" height="18" viewBox="0 0 21 18"><g fill="none" stroke="#333" stroke-width="1.500" stroke-linejoin="round"><path d="M1.400 14.600 C1.400 7 5.200 3 10.400 3 S19.400 7 19.400 14.600 Z"/><path d="M5.600 12 C6 8.400 8 6.600 10.400 6.600 S14.800 8.400 15.200 12 L13 13 L10.400 10.800 L7.800 13 Z" stroke-width="1.200"/></g></svg>
<svg style="left:1571px;top:850px;" width="18" height="17" viewBox="0 0 18 17"><g fill="none" stroke="#222" stroke-linecap="round"><path d="M2.400 2.400 H15.600" stroke-width="1.400"/><path d="M9 1.600 V13.800" stroke-width="1.800"/><path d="M2.400 14 H15.600" stroke-width="2"/><path d="M3.600 2.600 L1.600 8.800 M3.600 2.600 L5.600 8.800 M14.400 2.600 L12.400 8.800 M14.400 2.600 L16.400 8.800" stroke-width="0.900"/></g><path d="M1.200 8.800 h4.800 l-.6 1.800 h-3.600z M12 8.800 h4.800 l-.6 1.800 h-3.600z" fill="#222"/></svg>
<svg style="left:1573px;top:405px;" width="22" height="22" viewBox="0 0 22 22"><g stroke="#8a8a8a" stroke-width="0.800" stroke-linejoin="round"><path d="M4 12.800 L9.400 3.400 L13.200 5 L8.600 12.800z" fill="#9d9d9d"/><path d="M8.600 12.800 L13.200 5 L16.400 7.400 L11.800 12.800z" fill="#bdbdbd"/><path d="M11.800 12.800 L16.400 7.400 L18.400 10.200 L15.400 12.800z" fill="#d6d6d6"/><rect x="2.400" y="12.800" width="17.400" height="4.800" rx="1" fill="#e6e6e6" stroke="#666"/></g><circle cx="5" cy="15.200" r="1" fill="#555"/><path d="M8.400 14 v2.600 M11.400 14 v2.600 M14.400 14 v2.600 M17.400 14 v2.600" stroke="#999" stroke-width="0.800"/></svg>
<svg style="left:1573px;top:436px;" width="22" height="22" viewBox="0 0 22 22"><rect x="1.400" y="1.800" width="8.400" height="7.400" fill="#2a6fd6"/><path d="M4.200 1.800 v7.400 M7 1.800 v7.400 M1.400 4.300 h8.400 M1.400 6.800 h8.400" stroke="#8bb4f0" stroke-width="0.700"/><g fill="#fff" stroke="#333" stroke-width="1.200" stroke-linejoin="round"><path d="M6.200 9.400 L12.600 6.200 L19 9.200 V15.600 L12.400 19 L6.200 15.800z"/><path d="M6.200 9.400 L12.400 12.400 L19 9.200 M12.400 12.400 V19" fill="none"/></g></svg>
<svg style="left:1573px;top:466px;" width="22" height="22" viewBox="0 0 22 22"><rect x="1.600" y="1.800" width="8" height="7.600" fill="#555"/><path d="M4.200 1.800 v7.600 M6.900 1.800 v7.600 M1.600 4.300 h8 M1.600 6.800 h8" stroke="#ddd" stroke-width="0.700"/><g fill="#fff" stroke="#333" stroke-width="1.100" stroke-linejoin="round"><path d="M5.600 10.200 L11 7.600 L16.200 10 V15 L10.800 17.800 L5.600 15.200z"/><path d="M5.600 10.200 L10.800 12.600 L16.200 10 M10.800 12.600 V17.800" fill="none"/></g><path d="M5 9 c-2.400 3-2.400 7 0 10 M17.200 4 c2.800 4.400 2.800 10.600 0 15" fill="none" stroke="#333" stroke-width="1.100"/></svg>
<svg style="left:1573px;top:497px;" width="22" height="22" viewBox="0 0 22 22"><rect x="1.600" y="1.600" width="8" height="7.600" fill="#444"/><path d="M4.200 1.600 v7.600 M6.900 1.600 v7.600 M1.600 4.100 h8 M1.600 6.600 h8" stroke="#ddd" stroke-width="0.700"/><path d="M4.600 8 c-2.600 3.600-2.600 8 0 11.600 M17.600 6 c2.600 4.200 2.600 9.400 0 13.600" fill="none" stroke="#222" stroke-width="1.500"/><path d="M6.400 18 c2.600 0 6.200-7.600 9-7.600 M8.400 10.800 c2.400 0 2.600 7.200 6 7.200" fill="none" stroke="#222" stroke-width="1.700"/></svg>
<svg style="left:1440px;top:70px;" width="160" height="160" viewBox="0 0 160 160"><path d="M76.400 10.600 L83 23 H69.800z" fill="#dfe7f1"/><path d="M76.400 152 L83 140 H69.800z" fill="#dfe7f1"/><path d="M7.400 81.800 L17.600 75.400 V88.200z" fill="#dfe7f1"/><path d="M144.400 81.800 L134.400 75.400 V88.200z" fill="#dfe7f1"/><path d="M55.600 23.600 C44 27 36 32 30 39" fill="none" stroke="#dfe7f1" stroke-width="4.600"/><path d="M25.200 43.800 L27.600 33.200 L36.600 41.600z" fill="#dfe7f1"/><path d="M96.400 23.600 C108 27 116 32 122 39" fill="none" stroke="#dfe7f1" stroke-width="4.600"/><path d="M126.800 43.800 L124.400 33.200 L115.400 41.600z" fill="#dfe7f1"/><path d="M44 58 Q42 52 48 50 L68 45.600 Q74 44 80 45.600 L106 52 Q112 54 112 60 V88 Q112 94 107 98.400 L90 117.600 Q85 122 78 120 L48 110 Q42 108 42 101 Z" fill="#dfe7f1"/><path d="M52 56 L70 49 Q74 47.600 78 48.600 L100 54.400 Q104 56 100 58.600 L86 66 Q82 68 77 66.600 L53 60 Q48 58 52 56z" fill="#fff" opacity="0.95"/><path d="M46 66 Q46 62.600 50 63.600 L76 70.600 Q80 72 80 76 V106 Q80 111 75 109.600 L50 101 Q46 99.600 46 95z" fill="#fff" opacity="0.95"/><path d="M88 74 Q88 70 91 68 L104 60.600 Q108 58.600 108 63 V88 Q108 92 105 95 L92 109 Q88 113 88 107z" fill="#fff" opacity="0.95"/><path d="M37.400 110 V66" stroke="#4a44c0" stroke-width="1.300"/><path d="M37.400 110 L83.600 124.400" stroke="#e25a5a" stroke-width="1.300"/><path d="M37.400 110 L67 84.600" stroke="#7ccf7c" stroke-width="0.900" opacity="0.8"/><text x="33.400" y="61" font-family="Liberation Sans, sans-serif" font-size="11.500" font-weight="bold" fill="#4b45b8" textLength="7.600" lengthAdjust="spacingAndGlyphs">Z</text><text x="88.400" y="131.600" font-family="Liberation Sans, sans-serif" font-size="11.500" font-weight="bold" fill="#e04848" textLength="7.600" lengthAdjust="spacingAndGlyphs">X</text><text x="65.600" y="85" font-family="Liberation Sans, sans-serif" font-size="7" fill="#9bd69b">Y</text><text transform="translate(50.400 91.600) rotate(13) skewX(-4)" font-family="Liberation Sans, sans-serif" font-size="10.500" fill="#555" textLength="23.600" lengthAdjust="spacingAndGlyphs">Front</text><text transform="translate(68.400 56) rotate(16) skewX(-38) scale(1 0.600)" font-family="Liberation Sans, sans-serif" font-size="10.500" fill="#555" textLength="14" lengthAdjust="spacingAndGlyphs">Top</text><text transform="translate(97.600 97) rotate(-56) skewX(-8)" font-family="Liberation Sans, sans-serif" font-size="9.500" fill="#555" textLength="17" lengthAdjust="spacingAndGlyphs">Right</text></svg>
<svg style="left:1548px;top:203px;" width="19" height="19" viewBox="0 0 19 19"><defs><linearGradient id="cg1" x1="0" y1="0" x2="1" y2="0"><stop offset="0" stop-color="#8a8a8a"/><stop offset="1" stop-color="#d8d8d8"/></linearGradient></defs><path d="M1.600 4.200 L9.800 1.400 L17.400 3.600 L10 6.400z" fill="#f4f4f4" stroke="#555" stroke-width="0.800" stroke-linejoin="round"/><path d="M1.600 4.200 L10 6.400 V17.800 L2.400 14.200z" fill="url(#cg1)" stroke="#555" stroke-width="0.800" stroke-linejoin="round"/><path d="M10 6.400 L17.400 3.600 V13.600 L10 17.800z" fill="#e9e9e9" stroke="#555" stroke-width="0.800" stroke-linejoin="round"/></svg>
<svg style="left:1572px;top:209px;" width="9" height="6" viewBox="0 0 9 6"><path d="M0.600 1 h7.200 l-3.600 3.800z" fill="#222"/></svg>
<div style="left:156px;top:297.6px;width:174.9px;height:83.1px;border:4.9px solid #f50f0f;border-radius:11px;"></div>
</div></body></html>
